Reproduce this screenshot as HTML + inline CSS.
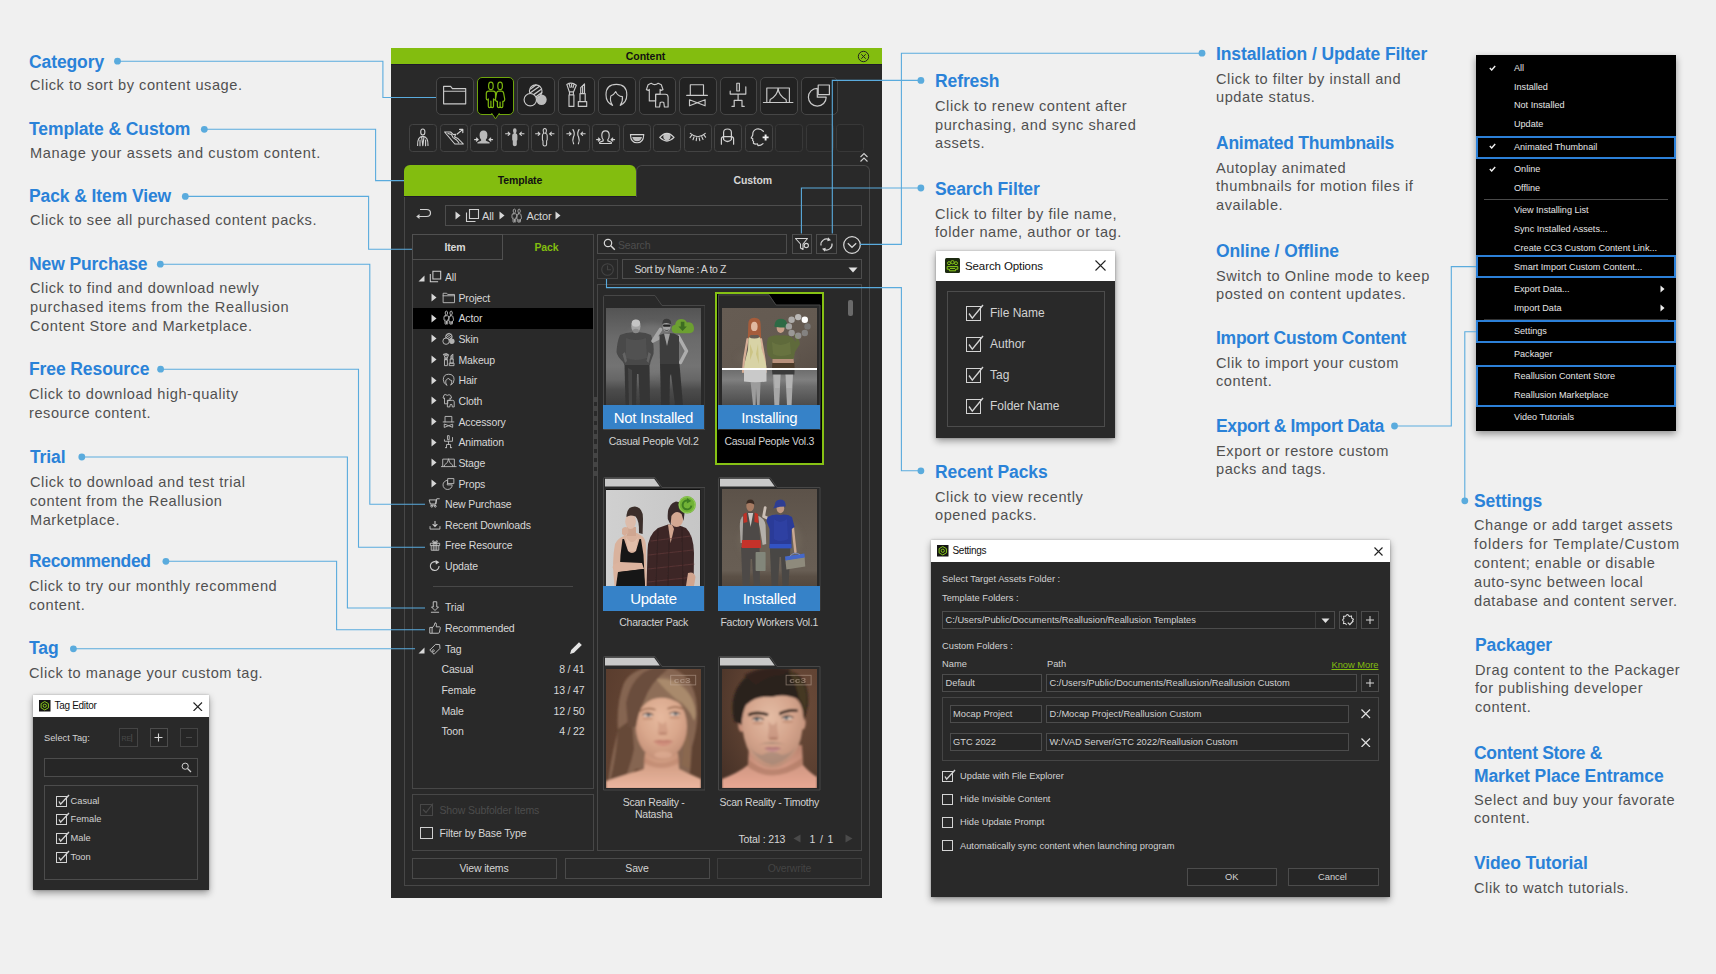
<!DOCTYPE html>
<html lang="en"><head><meta charset="utf-8"><title>Content Manager</title>
<style>
*{box-sizing:border-box;margin:0;padding:0}
html,body{width:1716px;height:974px;background:#f0f0f0;overflow:hidden}
body{font-family:"Liberation Sans",sans-serif;}
#root{position:relative;width:1716px;height:974px;background:#f0f0f0;overflow:hidden}
.a{position:absolute}
.h{position:absolute;color:#2a82d8;font-weight:bold;font-size:17.5px;line-height:22px;white-space:nowrap;letter-spacing:-0.1px;transform-origin:0 50%}
.t{position:absolute;color:#505050;font-size:14.6px;line-height:19px;white-space:nowrap;letter-spacing:0.55px}
.u{position:absolute;color:#d2d2d2;font-size:10.5px;line-height:14px;white-space:nowrap;letter-spacing:-0.2px}
.bx{position:absolute;border:1px solid #4d4d4d}
.ck{position:absolute;border:1px solid #c8c8c8}

#pn{position:absolute;left:391px;top:48px;width:491px;height:850px;background:#292929;color:#d6d6d6;font-size:10.5px}
#pn .ti{position:absolute;left:0;top:0;width:491px;height:17px;background:#83bd0f;border-bottom:1px solid #1e1a2a;color:#111;font-weight:bold;font-size:10.5px;line-height:17px;text-align:center;letter-spacing:0px;padding-left:18px}
.bb{position:absolute;width:37.5px;height:37.5px;border:1px solid #464646;border-radius:5px;background:#222;color:#c9c9c9}
.bb svg{position:absolute;left:-1px;top:-1px}
.sb{position:absolute;width:28px;height:27.5px;border:1px solid #434343;border-radius:3.5px;background:#272727;color:#d2d2d2}
.sb svg{position:absolute;left:-1px;top:-1px}
.pt{position:absolute;color:#d6d6d6;font-size:10.5px;line-height:14px;white-space:nowrap;letter-spacing:-0.15px}

#pb{position:absolute;left:391px;top:48px;width:491px;height:850px;color:#d6d6d6;font-size:10.5px}
.tab{position:absolute;top:117px;height:32px;line-height:32px;text-align:center;font-weight:bold;font-size:10.5px;letter-spacing:-0.1px}
.tr{position:absolute;left:22px;width:180px;height:20px;line-height:20px;font-size:10.5px;white-space:nowrap;color:#d8d8d8;letter-spacing:-0.15px}
.tr span{position:absolute;top:0}
.tr svg{position:absolute}
.ti path,.ti ellipse,.ti circle{stroke-width:1.75px}
.btn{position:absolute;border:1px solid #4a4a4a;text-align:center;font-size:10.5px;color:#d4d4d4;letter-spacing:-0.15px}

#pg{position:absolute;left:391px;top:48px;width:491px;height:850px;color:#d6d6d6;font-size:10.5px}
.ban{position:absolute;height:24.5px;background:rgba(55,138,214,.92);color:#fff;font-size:15px;line-height:25px;text-align:center;letter-spacing:-0.3px}
.lab{position:absolute;width:112px;text-align:center;color:#d2d2d2;font-size:10.5px;line-height:12.5px;letter-spacing:-0.25px}
.th{position:absolute;overflow:hidden}

.dlg{position:absolute;background:#292929;box-shadow:0 3px 7px rgba(0,0,0,.38), 0 0 2px rgba(0,0,0,.25)}
.dlg .tb{position:absolute;left:0;top:0;right:0;background:#fff;color:#111;font-size:10.5px}
.d{position:absolute;color:#d2d2d2;font-size:10.5px;line-height:14px;white-space:nowrap;letter-spacing:-0.2px}
.ds{position:absolute;color:#d2d2d2;font-size:9.3px;line-height:12px;white-space:nowrap;letter-spacing:0}
.in{position:absolute;border:1px solid #4c4c4c;background:#262626}
.mi{position:absolute;left:38px;color:#e6e6e6;font-size:9.1px;line-height:12px;white-space:nowrap;letter-spacing:0}
.hl{position:absolute;left:0;width:200px;border:2px solid #2c80d8}
</style></head>
<body><div id="root">
<svg class="a" style="left:0;top:0;z-index:50;pointer-events:none" width="1716" height="974" viewBox="0 0 1716 974"><path d="M117.5 61.2 L382.9 61.2 L382.9 97.5 L436 97.5" fill="none" stroke="#5aabdd" stroke-width="1.1"/><circle cx="117.5" cy="61.2" r="3.4" fill="#5aabdd"/><path d="M204.3 129.3 L375.6 129.3 L375.6 180.6 L404 180.6" fill="none" stroke="#5aabdd" stroke-width="1.1"/><circle cx="204.3" cy="129.3" r="3.4" fill="#5aabdd"/><path d="M185.3 196.4 L368.6 196.4 L368.6 249.3 L412 249.3" fill="none" stroke="#5aabdd" stroke-width="1.1"/><circle cx="185.3" cy="196.4" r="3.4" fill="#5aabdd"/><path d="M160.3 264.2 L369.8 264.2 L369.8 504.2 L425 504.2" fill="none" stroke="#5aabdd" stroke-width="1.1"/><circle cx="160.3" cy="264.2" r="3.4" fill="#5aabdd"/><path d="M160.6 369.2 L358.5 369.2 L358.5 547.2 L425 547.2" fill="none" stroke="#5aabdd" stroke-width="1.1"/><circle cx="160.6" cy="369.2" r="3.4" fill="#5aabdd"/><path d="M81.8 457 L347.4 457 L347.4 608 L425 608" fill="none" stroke="#5aabdd" stroke-width="1.1"/><circle cx="81.8" cy="457" r="3.4" fill="#5aabdd"/><path d="M165.9 561.3 L336.6 561.3 L336.6 629.8 L425 629.8" fill="none" stroke="#5aabdd" stroke-width="1.1"/><circle cx="165.9" cy="561.3" r="3.4" fill="#5aabdd"/><path d="M73.4 648.8 L415 648.8" fill="none" stroke="#5aabdd" stroke-width="1.1"/><circle cx="73.4" cy="648.8" r="3.4" fill="#5aabdd"/><path d="M920.9 80.4 L832.3 80.4 L832.3 233.5" fill="none" stroke="#5aabdd" stroke-width="1.1"/><circle cx="920.9" cy="80.4" r="3.4" fill="#5aabdd"/><path d="M920.9 188 L801.4 188 L801.4 233.5" fill="none" stroke="#5aabdd" stroke-width="1.1"/><circle cx="920.9" cy="188" r="3.4" fill="#5aabdd"/><path d="M1202 53.2 L901.4 53.2 L901.4 244.4 L860 244.4" fill="none" stroke="#5aabdd" stroke-width="1.1"/><circle cx="1202" cy="53.2" r="3.4" fill="#5aabdd"/><path d="M920.9 470.8 L901.4 470.8 L901.4 287.6 L606.5 287.6 L606.5 279" fill="none" stroke="#5aabdd" stroke-width="1.1"/><circle cx="920.9" cy="470.8" r="3.4" fill="#5aabdd"/><path d="M1394.5 426 L1451.3 426 L1451.3 266.6 L1476 266.6" fill="none" stroke="#5aabdd" stroke-width="1.1"/><circle cx="1394.5" cy="426" r="3.4" fill="#5aabdd"/><path d="M1464.8 500.8 L1464.8 331.8 L1476 331.8" fill="none" stroke="#5aabdd" stroke-width="1.1"/><circle cx="1464.8" cy="500.8" r="3.4" fill="#5aabdd"/></svg>
<div class="h" style="left:29px;top:50.7px;">Category</div>
<div class="t" style="left:30px;top:76.3px;">Click to sort by content usage.</div>
<div class="h" style="left:29px;top:117.7px;">Template &amp; Custom</div>
<div class="t" style="left:30px;top:144.3px;letter-spacing:0.63px">Manage your assets and custom content.</div>
<div class="h" style="left:29px;top:184.7px;">Pack &amp; Item View</div>
<div class="t" style="left:30px;top:211.3px;">Click to see all purchased content packs.</div>
<div class="h" style="left:29px;top:252.7px;">New Purchase</div>
<div class="t" style="left:30px;top:279.3px;">Click to find and download newly</div>
<div class="t" style="left:30px;top:298.3px;letter-spacing:0.64px">purchased items from the Reallusion</div>
<div class="t" style="left:30px;top:317.3px;">Content Store and Marketplace.</div>
<div class="h" style="left:29px;top:357.7px;">Free Resource</div>
<div class="t" style="left:29px;top:385.3px;">Click to download high-quality</div>
<div class="t" style="left:29px;top:404.3px;">resource content.</div>
<div class="h" style="left:30px;top:445.7px;">Trial</div>
<div class="t" style="left:30px;top:473.3px;">Click to download and test trial</div>
<div class="t" style="left:30px;top:492.3px;">content from the Reallusion</div>
<div class="t" style="left:30px;top:511.3px;">Marketplace.</div>
<div class="h" style="left:29px;top:549.7px;letter-spacing:-0.35px">Recommended</div>
<div class="t" style="left:29px;top:577.3px;">Click to try our monthly recommend</div>
<div class="t" style="left:29px;top:596.3px;">content.</div>
<div class="h" style="left:29px;top:636.7px;">Tag</div>
<div class="t" style="left:29px;top:664.3px;">Click to manage your custom tag.</div>
<div class="h" style="left:935px;top:69.7px;">Refresh</div>
<div class="t" style="left:935px;top:97.3px;">Click to renew content after</div>
<div class="t" style="left:935px;top:115.8px;">purchasing, and sync shared</div>
<div class="t" style="left:935px;top:134.3px;">assets.</div>
<div class="h" style="left:935px;top:177.7px;">Search Filter</div>
<div class="t" style="left:935px;top:205.3px;">Click to filter by file name,</div>
<div class="t" style="left:935px;top:223.3px;">folder name, author or tag.</div>
<div class="h" style="left:935px;top:460.7px;">Recent Packs</div>
<div class="t" style="left:935px;top:488.3px;">Click to view recently</div>
<div class="t" style="left:935px;top:506.3px;">opened packs.</div>
<div class="h" style="left:1216px;top:42.7px;">Installation / Update Filter</div>
<div class="t" style="left:1216px;top:70.3px;">Click to filter by install and</div>
<div class="t" style="left:1216px;top:88.3px;">update status.</div>
<div class="h" style="left:1216px;top:131.7px;letter-spacing:-0.25px">Animated Thumbnails</div>
<div class="t" style="left:1216px;top:159.3px;">Autoplay animated</div>
<div class="t" style="left:1216px;top:177.3px;">thumbnails for motion files if</div>
<div class="t" style="left:1216px;top:196.3px;">available.</div>
<div class="h" style="left:1216px;top:239.7px;">Online / Offline</div>
<div class="t" style="left:1216px;top:267.3px;">Switch to Online mode to keep</div>
<div class="t" style="left:1216px;top:285.3px;">posted on content updates.</div>
<div class="h" style="left:1216px;top:326.7px;letter-spacing:-0.25px">Import Custom Content</div>
<div class="t" style="left:1216px;top:354.3px;">Clik to import your custom</div>
<div class="t" style="left:1216px;top:372.3px;">content.</div>
<div class="h" style="left:1216px;top:414.7px;letter-spacing:-0.36px">Export &amp; Import Data</div>
<div class="t" style="left:1216px;top:442.3px;">Export or restore custom</div>
<div class="t" style="left:1216px;top:460.3px;">packs and tags.</div>
<div class="h" style="left:1474px;top:489.7px;">Settings</div>
<div class="t" style="left:1474px;top:516.3px;">Change or add target assets</div>
<div class="t" style="left:1474px;top:535.3px;letter-spacing:0.88px">folders for Template/Custom</div>
<div class="t" style="left:1474px;top:554.3px;">content; enable or disable</div>
<div class="t" style="left:1474px;top:573.3px;">auto-sync between local</div>
<div class="t" style="left:1474px;top:592.3px;">database and content server.</div>
<div class="h" style="left:1475px;top:633.7px;">Packager</div>
<div class="t" style="left:1475px;top:661.3px;">Drag content to the Packager</div>
<div class="t" style="left:1475px;top:679.3px;">for publishing developer</div>
<div class="t" style="left:1475px;top:698.3px;">content.</div>
<div class="h" style="left:1474px;top:741.7px;letter-spacing:-0.35px">Content Store &amp;</div>
<div class="h" style="left:1474px;top:764.7px;">Market Place Entramce</div>
<div class="t" style="left:1474px;top:791.3px;">Select and buy your favorate</div>
<div class="t" style="left:1474px;top:809.3px;">content.</div>
<div class="h" style="left:1474px;top:851.7px;">Video Tutorial</div>
<div class="t" style="left:1474px;top:879.3px;">Clik to watch tutorials.</div>
<div id="pn">
<div class="ti">Content</div>
<svg class="a" style="left:466px;top:2px" width="13" height="13" viewBox="0 0 13 13"><circle cx="6.5" cy="6.5" r="5.2" fill="none" stroke="#222" stroke-width="1"/><path d="M4.3 4.3 L8.7 8.7 M8.7 4.3 L4.3 8.7" stroke="#222" stroke-width="1" fill="none"/></svg>
<div class="bb" style="left:45.4px;top:29px"><svg width="37.5" height="37.5" viewBox="0 0 37.5 37.5"><path d="M7.6 26.8 V9.3 H14.6 L16.4 11.6 H29.7 V26.8 Z M7.6 14.2 H29.7" fill="none" stroke="currentColor" stroke-width="1.15" stroke-linejoin="round" stroke-linecap="round" /></svg></div>
<div class="bb" style="left:85.87px;top:29px;background:#000;border-color:#6fa50c;color:#7db70e"><svg width="37.5" height="37.5" viewBox="0 0 37.5 37.5"><ellipse cx="13.9" cy="8.9" rx="2.3" ry="3.8" fill="none" stroke="currentColor" stroke-width="1.2"/><ellipse cx="23.1" cy="8.9" rx="2.3" ry="3.8" fill="none" stroke="currentColor" stroke-width="1.2"/><path d="M11.6 14.2 H16.2 Q18.5 14.2 18.5 16.6 V21.6 Q18.5 22.9 17.5 22.9 Q16.5 22.9 16.5 21.9 V29.2 Q16.5 30.6 15.2 30.6 Q13.9 30.6 13.9 29.2 V24 V29.2 Q13.9 30.6 12.6 30.6 Q11.3 30.6 11.3 29.2 V21.9 Q11.3 22.9 10.3 22.9 Q9.3 22.9 9.3 21.6 V16.6 Q9.3 14.2 11.6 14.2 Z" fill="none" stroke="currentColor" stroke-width="1.2" stroke-linejoin="round" stroke-linecap="round" /><path d="M21.8 14.2 H24.4 Q26.2 14.2 26.6 16 L27.7 22 Q27.9 24 26.5 24.4 H25.8 V29.2 Q25.8 30.6 24.5 30.6 Q23.1 30.6 23.1 29.2 V25 V29.2 Q23.1 30.6 21.8 30.6 Q20.4 30.6 20.4 29.2 V24.4 H19.7 Q18.3 24 18.5 22 L19.6 16 Q20 14.2 21.8 14.2 Z" fill="none" stroke="currentColor" stroke-width="1.2" stroke-linejoin="round" stroke-linecap="round" /></svg></div>
<svg class="a" style="left:100.07000000000001px;top:65.3px" width="9" height="7" viewBox="0 0 9 7"><path d="M0.5 0 L4.5 5.8 L8.5 0" fill="#000" stroke="#6fa50c" stroke-width="1"/></svg>
<div class="bb" style="left:126.34px;top:29px"><svg width="37.5" height="37.5" viewBox="0 0 37.5 37.5"><circle cx="24.5" cy="22.8" r="5.2" fill="currentColor" opacity=".92"/><circle cx="18.7" cy="14.1" r="6.3" fill="#222" stroke="currentColor" stroke-width="1.15"/><path d="M13.6 12 L19 8 M13.4 15.8 L22.6 9.2 M15.4 18.6 L24.6 12 M19 19.8 L24.8 15.6" fill="none" stroke="currentColor" stroke-width="1.3" stroke-linejoin="round" stroke-linecap="round" /><circle cx="13.3" cy="22.7" r="6.2" fill="#222" stroke="currentColor" stroke-width="1.15"/></svg></div>
<div class="bb" style="left:166.81px;top:29px"><svg width="37.5" height="37.5" viewBox="0 0 37.5 37.5"><path d="M11 17.8 H15.9 V29.4 H11 Z M11.5 14.8 H15.4 V17.8 H11.5 Z M8.8 7.4 L11.3 14.8 H15.6 L18.3 8.2 Q13.5 4.6 8.8 7.4 Z M11.2 7 L12.2 10.5 M13.6 6.4 V10 M16 7.4 L15 10.6" fill="none" stroke="currentColor" stroke-width="1.15" stroke-linejoin="round" stroke-linecap="round" /><path d="M20.3 24.6 H28.7 V29.4 H20.3 Z M22 16.6 H27.2 V24.6 H22 Z M22.7 16.6 V10.6 L26.5 6.8 V16.6 M24.6 9.5 V16" fill="none" stroke="currentColor" stroke-width="1.15" stroke-linejoin="round" stroke-linecap="round" /></svg></div>
<div class="bb" style="left:207.28px;top:29px"><svg width="37.5" height="37.5" viewBox="0 0 37.5 37.5"><path d="M14.6 28.4 Q8 25.6 8 17.8 Q8 7.4 18.4 7.4 Q28.8 7.4 28.8 17.8 Q28.8 25.6 22.2 28.4 Q25 24.5 24.4 19.6 Q19.5 19.2 17.8 14.6 Q16.2 17.6 12.8 19 Q11.6 24.6 14.6 28.4 Z" fill="none" stroke="currentColor" stroke-width="1.15" stroke-linejoin="round" stroke-linecap="round" /></svg></div>
<div class="bb" style="left:247.75px;top:29px"><svg width="37.5" height="37.5" viewBox="0 0 37.5 37.5"><path d="M12.2 6.3 Q15.7 9 19.2 6.3 L22.3 7.7 L24 12.6 L21.3 13.6 L21.1 12.4 V17.2 H16.6 V23.9 H10.3 V12.4 L10.1 13.6 L7.4 12.6 L9.1 7.7 Z" fill="none" stroke="currentColor" stroke-width="1.15" stroke-linejoin="round" stroke-linecap="round" /><path d="M16.6 17.2 H26.4 Q29 17.2 29.1 20 V30 H25.4 L24.8 25.6 Q23 24.4 21.2 25.6 L20.6 30 H16.6 Z" fill="none" stroke="currentColor" stroke-width="1.15" stroke-linejoin="round" stroke-linecap="round" /></svg></div>
<div class="bb" style="left:288.21999999999997px;top:29px"><svg width="37.5" height="37.5" viewBox="0 0 37.5 37.5"><path d="M11.3 18.4 V7.7 H24.5 V18.4 M7.7 18.4 H28.4" fill="none" stroke="currentColor" stroke-width="1.15" stroke-linejoin="round" stroke-linecap="round" /><path d="M10.5 22.7 L18.3 25.7 L26.1 22.7 V28.8 L18.3 25.7 L10.5 28.8 Z" fill="none" stroke="currentColor" stroke-width="1.15" stroke-linejoin="round" stroke-linecap="round" /></svg></div>
<div class="bb" style="left:328.68999999999994px;top:29px"><svg width="37.5" height="37.5" viewBox="0 0 37.5 37.5"><path d="M16.8 6.2 H19.4 V14 H16.8 Z" fill="none" stroke="currentColor" stroke-width="1.15" stroke-linejoin="round" stroke-linecap="round" /><path d="M10.2 14.2 V17.1 H25.8 V9.8 M18.1 17.1 V23.3 M14.2 29.4 V23.3 H22 V29.4 M12 29.4 H14.2 M22 29.4 H24.2" fill="none" stroke="currentColor" stroke-width="1.2" stroke-linejoin="round" stroke-linecap="round" /></svg></div>
<div class="bb" style="left:369.15999999999997px;top:29px"><svg width="37.5" height="37.5" viewBox="0 0 37.5 37.5"><path d="M6.8 25.2 V11 H29.4 V25.2 M3.4 25.5 H32.9 M18.1 11 Q17.6 18.6 10.2 22.4 L9.8 25.2 M18.1 11 Q18.6 18.6 26 22.4 L26.4 25.2" fill="none" stroke="currentColor" stroke-width="1.15" stroke-linejoin="round" stroke-linecap="round" /></svg></div>
<div class="bb" style="left:409.63px;top:29px"><svg width="37.5" height="37.5" viewBox="0 0 37.5 37.5"><path d="M16.3 11.3 A8.9 8.9 0 1 0 25.2 20.2 H16.3 Z" fill="none" stroke="currentColor" stroke-width="1.2" stroke-linejoin="round" stroke-linecap="round" /><path d="M17.2 8 H28.4 V17.7 H17.2 Z" fill="#222" stroke="currentColor" stroke-width="1.2" stroke-linejoin="round" stroke-linecap="round" /></svg></div>
<div class="sb" style="left:18.0px;top:76px;"><svg width="28" height="27.5" viewBox="0 0 28 27.5"><ellipse cx="13.8" cy="8" rx="2.1" ry="3" fill="none" stroke="currentColor" stroke-width="1.1"/><path d="M8.6 21.5 Q8.2 12.6 13.8 12.4 Q19.4 12.6 19 21.5 M11 16 V21.8 M16.6 16 V21.8 M12.6 12.8 L13.8 21.6 L15 12.8" fill="none" stroke="currentColor" stroke-width="1.1" stroke-linejoin="round" stroke-linecap="round" /></svg></div>
<div class="sb" style="left:48.5px;top:76px;"><svg width="28" height="27.5" viewBox="0 0 28 27.5"><path d="M4.6 8 H10.6 L13.4 10.6 L15.6 10.2 L14.6 13 L18 14.6 L23.4 20 H14.8 Z M8 9.6 L11.4 10.6 L13 13.6 L16.6 16 L18.8 18.6" fill="none" stroke="currentColor" stroke-width="1.05" stroke-linejoin="round" stroke-linecap="round" /><path d="M17.2 10 L22.6 5.6 M19.6 5.4 H22.8 V8.6" fill="none" stroke="currentColor" stroke-width="1.2" stroke-linejoin="round" stroke-linecap="round" /></svg></div>
<div class="sb" style="left:79.0px;top:76px;"><svg width="28" height="27.5" viewBox="0 0 28 27.5"><path d="M13.5 6.6 Q17.4 6.6 17.4 11.2 Q17.4 14.4 15.9 15.6 V16.8 L19.4 18.2 Q19.8 18.6 19.6 19.6 H7.4 Q7.2 18.6 7.6 18.2 L11.1 16.8 V15.6 Q9.6 14.4 9.6 11.2 Q9.6 6.6 13.5 6.6 Z" fill="currentColor" opacity=".85"/><path d="M4.6 15.6 H8.2 M6.3999999999999995 14.0 L8.2 15.6 L6.3999999999999995 17.2 M22.6 15.6 H19 M20.8 14.0 L19 15.6 L20.8 17.2" fill="none" stroke="currentColor" stroke-width="1.1" stroke-linejoin="round" stroke-linecap="round" /></svg></div>
<div class="sb" style="left:109.5px;top:76px;"><svg width="28" height="27.5" viewBox="0 0 28 27.5"><path d="M13.8 4.2 Q15.6 4.2 15.6 6.6 Q15.6 8.6 14.6 9.2 Q16.4 9.6 16.4 11.6 V15.6 Q16.4 16.6 15.8 16.8 V20.6 Q15.8 22.2 13.8 22.2 Q11.8 22.2 11.8 20.6 V16.8 Q11.2 16.6 11.2 15.6 V11.6 Q11.2 9.6 13 9.2 Q12 8.6 12 6.6 Q12 4.2 13.8 4.2 Z" fill="currentColor" opacity=".85"/><path d="M4.6 9.8 H9 M7.2 8.200000000000001 L9 9.8 L7.2 11.4 M23 9.8 H18.6 M20.400000000000002 8.200000000000001 L18.6 9.8 L20.400000000000002 11.4" fill="none" stroke="currentColor" stroke-width="1.1" stroke-linejoin="round" stroke-linecap="round" /></svg></div>
<div class="sb" style="left:140.0px;top:76px;"><svg width="28" height="27.5" viewBox="0 0 28 27.5"><path d="M13.8 4.4 Q15.4 4.4 15.4 6.6 Q15.4 8.6 14.4 9.3 Q16.2 9.7 16.2 11.6 V15.6 Q16.2 16.5 15.6 16.8 V20.6 Q15.6 22 13.8 22 Q12 22 12 20.6 V16.8 Q11.4 16.5 11.4 15.6 V11.6 Q11.4 9.7 13.2 9.3 Q12.2 8.6 12.2 6.6 Q12.2 4.4 13.8 4.4 Z" fill="none" stroke="currentColor" stroke-width="1.05" stroke-linejoin="round" stroke-linecap="round" /><path d="M4.6 9.8 H9 M7.2 8.200000000000001 L9 9.8 L7.2 11.4 M23 9.8 H18.6 M20.400000000000002 8.200000000000001 L18.6 9.8 L20.400000000000002 11.4" fill="none" stroke="currentColor" stroke-width="1.1" stroke-linejoin="round" stroke-linecap="round" /></svg></div>
<div class="sb" style="left:170.5px;top:76px;"><svg width="28" height="27.5" viewBox="0 0 28 27.5"><path d="M11 5.6 Q13.4 9.6 11.4 13 Q10 16.6 11.6 19.8 M17 5.6 Q14.6 9.6 16.6 13 Q18 16.6 16.4 19.8" fill="none" stroke="currentColor" stroke-width="1.2" stroke-linejoin="round" stroke-linecap="round" /><path d="M4.8 9.8 H9.2 M7.3999999999999995 8.200000000000001 L9.2 9.8 L7.3999999999999995 11.4 M23.2 9.8 H18.8 M20.6 8.200000000000001 L18.8 9.8 L20.6 11.4" fill="none" stroke="currentColor" stroke-width="1.1" stroke-linejoin="round" stroke-linecap="round" /></svg></div>
<div class="sb" style="left:201.0px;top:76px;"><svg width="28" height="27.5" viewBox="0 0 28 27.5"><path d="M13.5 6.8 Q17.2 6.8 17.2 11.2 Q17.2 14.4 15.8 15.6 V16.9 L19.3 18.3 V19.5 H7.7 V18.3 L11.2 16.9 V15.6 Q9.8 14.4 9.8 11.2 Q9.8 6.8 13.5 6.8 Z" fill="none" stroke="currentColor" stroke-width="1.15" stroke-linejoin="round" stroke-linecap="round" /><path d="M4.6 15.6 H8.2 M6.3999999999999995 14.0 L8.2 15.6 L6.3999999999999995 17.2 M22.6 15.6 H19 M20.8 14.0 L19 15.6 L20.8 17.2" fill="none" stroke="currentColor" stroke-width="1.1" stroke-linejoin="round" stroke-linecap="round" /></svg></div>
<div class="sb" style="left:231.5px;top:76px;"><svg width="28" height="27.5" viewBox="0 0 28 27.5"><path d="M7.4 10.6 H20.8 Q20.4 18.8 14.1 18.8 Q7.8 18.8 7.4 10.6 Z" fill="none" stroke="currentColor" stroke-width="1.1" stroke-linejoin="round" stroke-linecap="round" /><path d="M9.2 13 H19 Q18 17.2 14.1 17.2 Q10.2 17.2 9.2 13 Z" fill="currentColor" opacity=".9"/></svg></div>
<div class="sb" style="left:262.0px;top:76px;"><svg width="28" height="27.5" viewBox="0 0 28 27.5"><path d="M6.8 13.4 Q13.9 5.2 21 13.4 Q13.9 20.6 6.8 13.4 Z" fill="none" stroke="currentColor" stroke-width="1.3" stroke-linejoin="round" stroke-linecap="round" /><circle cx="13.9" cy="12.6" r="3.6" fill="currentColor" opacity=".9"/></svg></div>
<div class="sb" style="left:292.5px;top:76px;"><svg width="28" height="27.5" viewBox="0 0 28 27.5"><path d="M6.3 9.4 Q13.8 16 21.3 9.4 M7.6 11.4 L6 13.6 M10 13 L9 15.8 M12.6 13.8 L12.2 16.6 M15.2 13.8 L15.8 16.6 M17.8 12.8 L19 15.4 M20 11.2 L21.6 13.2" fill="none" stroke="currentColor" stroke-width="1.1" stroke-linejoin="round" stroke-linecap="round" /></svg></div>
<div class="sb" style="left:323.0px;top:76px;"><svg width="28" height="27.5" viewBox="0 0 28 27.5"><path d="M9.6 12.6 V8.4 Q9.6 5 13.5 5 Q17.4 5 17.4 8.4 V12.6 M7.4 20.2 V15 Q7.4 12.8 9.6 12.6 M19.6 20.2 V15 Q19.6 12.8 17.4 12.6 M9.6 12.6 H17.4 V15.6 Q13.5 19.4 9.6 15.6 Z" fill="none" stroke="currentColor" stroke-width="1.2" stroke-linejoin="round" stroke-linecap="round" /></svg></div>
<div class="sb" style="left:353.5px;top:76px;"><svg width="28" height="27.5" viewBox="0 0 28 27.5"><path d="M18.4 7.4 Q15.6 4.2 11.6 5 Q7.4 6.4 7.8 11 L6.2 14 L7.8 14.8 L7.6 16.6 L8.6 17.4 L8.4 19.2 Q10.2 20.6 12.4 19.8 L13 21.6 Q16 21.6 18 19.6" fill="none" stroke="currentColor" stroke-width="1.2" stroke-linejoin="round" stroke-linecap="round" /><path d="M20.6 10.4 V16.4 M17.6 13.4 H23.6" stroke="#f2f2f2" stroke-width="1.9" fill="none"/></svg></div>
<div class="sb" style="left:384.0px;top:76px;border-color:#383838;"></div>
<div class="sb" style="left:414.5px;top:76px;border-color:#383838;"></div>
<div class="sb" style="left:445.0px;top:76px;border-color:#383838;"></div>
<svg class="a" style="left:468px;top:104px" width="10" height="11" viewBox="0 0 10 11"><path d="M1.5 5 L5 1.5 L8.5 5 M1.5 9.5 L5 6 L8.5 9.5" fill="none" stroke="#d0d0d0" stroke-width="1.1"/></svg>
</div>
<div id="pb">
<div class="bx" style="left:12.5px;top:148px;width:466px;height:690px;border-color:#474747"></div>
<div class="tab" style="left:245px;width:233.5px;border:1px solid #474747;border-bottom:none;border-radius:6px 6px 0 0;color:#d6d6d6;background:#292929;line-height:29px">Custom</div>
<div class="tab" style="left:13px;width:232px;background:#83bd0f;border-radius:6px 6px 0 0;color:#111;border-bottom:1px solid #1e1a2a;line-height:31px">Template</div>
<svg class="a" style="left:24px;top:159px" width="17" height="14" viewBox="0 0 17 14"><path d="M5 2.5 H11.5 Q15.5 2.5 15.5 6 Q15.5 9.5 11.5 9.5 H3" fill="none" stroke="#d0d0d0" stroke-width="1.2"/><path d="M4.5 7 L1.2 9.5 L4.5 12 Z" fill="#d0d0d0"/></svg>
<div class="bx" style="left:54px;top:157px;width:417px;height:21px"></div>
<svg class="a" style="left:64px;top:163px" width="6" height="9" viewBox="0 0 6 9"><path d="M0.5 0.5 L5.5 4.5 L0.5 8.5 Z" fill="#d8d8d8"/></svg>
<svg class="a" style="left:74px;top:160px" width="15" height="15" viewBox="0 0 15 15"><path d="M4.5 1.5 H13.5 V10.5 H4.5 Z M1.5 4.5 V13.5 H10.5" fill="none" stroke="#d0d0d0" stroke-width="1.1"/></svg>
<div class="pt" style="left:91px;top:160.5px;font-size:11px">All</div>
<svg class="a" style="left:108px;top:163px" width="6" height="9" viewBox="0 0 6 9"><path d="M0.5 0.5 L5.5 4.5 L0.5 8.5 Z" fill="#d8d8d8"/></svg>
<svg class="ti" width="16" height="16" viewBox="3.5 3 31 31" style="left:118px;top:159.5px;color:#a8a8a8;position:absolute"><ellipse cx="13.9" cy="8.9" rx="2.3" ry="3.8" fill="none" stroke="currentColor" stroke-width="1.2"/><ellipse cx="23.1" cy="8.9" rx="2.3" ry="3.8" fill="none" stroke="currentColor" stroke-width="1.2"/><path d="M11.6 14.2 H16.2 Q18.5 14.2 18.5 16.6 V21.6 Q18.5 22.9 17.5 22.9 Q16.5 22.9 16.5 21.9 V29.2 Q16.5 30.6 15.2 30.6 Q13.9 30.6 13.9 29.2 V24 V29.2 Q13.9 30.6 12.6 30.6 Q11.3 30.6 11.3 29.2 V21.9 Q11.3 22.9 10.3 22.9 Q9.3 22.9 9.3 21.6 V16.6 Q9.3 14.2 11.6 14.2 Z" fill="none" stroke="currentColor" stroke-width="1.2" stroke-linejoin="round" stroke-linecap="round" /><path d="M21.8 14.2 H24.4 Q26.2 14.2 26.6 16 L27.7 22 Q27.9 24 26.5 24.4 H25.8 V29.2 Q25.8 30.6 24.5 30.6 Q23.1 30.6 23.1 29.2 V25 V29.2 Q23.1 30.6 21.8 30.6 Q20.4 30.6 20.4 29.2 V24.4 H19.7 Q18.3 24 18.5 22 L19.6 16 Q20 14.2 21.8 14.2 Z" fill="none" stroke="currentColor" stroke-width="1.2" stroke-linejoin="round" stroke-linecap="round" /></svg>
<div class="pt" style="left:135.5px;top:160.5px;font-size:11px">Actor</div>
<svg class="a" style="left:164px;top:163px" width="6" height="9" viewBox="0 0 6 9"><path d="M0.5 0.5 L5.5 4.5 L0.5 8.5 Z" fill="#d8d8d8"/></svg>
<div class="bx" style="left:20.5px;top:186px;width:182px;height:555px;border-color:#474747"></div>
<div class="bx" style="left:20.5px;top:186px;width:91px;height:26px;border-color:#505050"></div>
<div class="pt" style="left:53.5px;top:192px;font-weight:bold;color:#d8d8d8">Item</div>
<div class="pt" style="left:143.5px;top:192px;font-weight:bold;color:#83bd0f">Pack</div>
<div class="tr" style="top:219.0px"><svg width="7" height="7" viewBox="0 0 7 7" style="left:4.5px;top:8px"><path d="M6.5 0.5 V6.5 H0.5 Z" fill="#d8d8d8"/></svg><svg width="13" height="13" viewBox="0 0 15 15" style="left:16px;top:3px"><path d="M4.5 1.5 H13.5 V10.5 H4.5 Z M1.5 4.5 V13.5 H10.5" fill="none" stroke="#d0d0d0" stroke-width="1.2"/></svg><span style="left:32px">All</span></div>
<div class="tr" style="top:239.7px"><svg width="6" height="9" viewBox="0 0 6 9" style="left:18px;top:5.5px"><path d="M0.5 0.5 L5.5 4.5 L0.5 8.5 Z" fill="#d8d8d8"/></svg><svg class="ti" width="16" height="16" viewBox="3.5 3 31 31" style="left:28px;top:2px;color:#bebebe;position:absolute"><path d="M7.6 26.8 V9.3 H14.6 L16.4 11.6 H29.7 V26.8 Z M7.6 14.2 H29.7" fill="none" stroke="currentColor" stroke-width="1.15" stroke-linejoin="round" stroke-linecap="round" /></svg><span style="left:45.5px">Project</span></div>
<div class="a" style="left:21.5px;top:260.3px;width:180px;height:20.5px;background:#000"></div>
<div class="tr" style="top:260.3px"><svg width="6" height="9" viewBox="0 0 6 9" style="left:18px;top:5.5px"><path d="M0.5 0.5 L5.5 4.5 L0.5 8.5 Z" fill="#d8d8d8"/></svg><svg class="ti" width="16" height="16" viewBox="3.5 3 31 31" style="left:28px;top:2px;color:#bebebe;position:absolute"><ellipse cx="13.9" cy="8.9" rx="2.3" ry="3.8" fill="none" stroke="currentColor" stroke-width="1.2"/><ellipse cx="23.1" cy="8.9" rx="2.3" ry="3.8" fill="none" stroke="currentColor" stroke-width="1.2"/><path d="M11.6 14.2 H16.2 Q18.5 14.2 18.5 16.6 V21.6 Q18.5 22.9 17.5 22.9 Q16.5 22.9 16.5 21.9 V29.2 Q16.5 30.6 15.2 30.6 Q13.9 30.6 13.9 29.2 V24 V29.2 Q13.9 30.6 12.6 30.6 Q11.3 30.6 11.3 29.2 V21.9 Q11.3 22.9 10.3 22.9 Q9.3 22.9 9.3 21.6 V16.6 Q9.3 14.2 11.6 14.2 Z" fill="none" stroke="currentColor" stroke-width="1.2" stroke-linejoin="round" stroke-linecap="round" /><path d="M21.8 14.2 H24.4 Q26.2 14.2 26.6 16 L27.7 22 Q27.9 24 26.5 24.4 H25.8 V29.2 Q25.8 30.6 24.5 30.6 Q23.1 30.6 23.1 29.2 V25 V29.2 Q23.1 30.6 21.8 30.6 Q20.4 30.6 20.4 29.2 V24.4 H19.7 Q18.3 24 18.5 22 L19.6 16 Q20 14.2 21.8 14.2 Z" fill="none" stroke="currentColor" stroke-width="1.2" stroke-linejoin="round" stroke-linecap="round" /></svg><span style="left:45.5px">Actor</span></div>
<div class="tr" style="top:280.9px"><svg width="6" height="9" viewBox="0 0 6 9" style="left:18px;top:5.5px"><path d="M0.5 0.5 L5.5 4.5 L0.5 8.5 Z" fill="#d8d8d8"/></svg><svg class="ti" width="16" height="16" viewBox="3.5 3 31 31" style="left:28px;top:2px;color:#bebebe;position:absolute"><circle cx="24.5" cy="22.8" r="5.2" fill="currentColor" opacity=".92"/><circle cx="18.7" cy="14.1" r="6.3" fill="#292929" stroke="currentColor" stroke-width="1.15"/><path d="M13.6 12 L19 8 M13.4 15.8 L22.6 9.2 M15.4 18.6 L24.6 12 M19 19.8 L24.8 15.6" fill="none" stroke="currentColor" stroke-width="1.3" stroke-linejoin="round" stroke-linecap="round" /><circle cx="13.3" cy="22.7" r="6.2" fill="#292929" stroke="currentColor" stroke-width="1.15"/></svg><span style="left:45.5px">Skin</span></div>
<div class="tr" style="top:301.6px"><svg width="6" height="9" viewBox="0 0 6 9" style="left:18px;top:5.5px"><path d="M0.5 0.5 L5.5 4.5 L0.5 8.5 Z" fill="#d8d8d8"/></svg><svg class="ti" width="16" height="16" viewBox="3.5 3 31 31" style="left:28px;top:2px;color:#bebebe;position:absolute"><path d="M11 17.8 H15.9 V29.4 H11 Z M11.5 14.8 H15.4 V17.8 H11.5 Z M8.8 7.4 L11.3 14.8 H15.6 L18.3 8.2 Q13.5 4.6 8.8 7.4 Z M11.2 7 L12.2 10.5 M13.6 6.4 V10 M16 7.4 L15 10.6" fill="none" stroke="currentColor" stroke-width="1.15" stroke-linejoin="round" stroke-linecap="round" /><path d="M20.3 24.6 H28.7 V29.4 H20.3 Z M22 16.6 H27.2 V24.6 H22 Z M22.7 16.6 V10.6 L26.5 6.8 V16.6 M24.6 9.5 V16" fill="none" stroke="currentColor" stroke-width="1.15" stroke-linejoin="round" stroke-linecap="round" /></svg><span style="left:45.5px">Makeup</span></div>
<div class="tr" style="top:322.2px"><svg width="6" height="9" viewBox="0 0 6 9" style="left:18px;top:5.5px"><path d="M0.5 0.5 L5.5 4.5 L0.5 8.5 Z" fill="#d8d8d8"/></svg><svg class="ti" width="16" height="16" viewBox="3.5 3 31 31" style="left:28px;top:2px;color:#bebebe;position:absolute"><path d="M14.6 28.4 Q8 25.6 8 17.8 Q8 7.4 18.4 7.4 Q28.8 7.4 28.8 17.8 Q28.8 25.6 22.2 28.4 Q25 24.5 24.4 19.6 Q19.5 19.2 17.8 14.6 Q16.2 17.6 12.8 19 Q11.6 24.6 14.6 28.4 Z" fill="none" stroke="currentColor" stroke-width="1.15" stroke-linejoin="round" stroke-linecap="round" /></svg><span style="left:45.5px">Hair</span></div>
<div class="tr" style="top:342.9px"><svg width="6" height="9" viewBox="0 0 6 9" style="left:18px;top:5.5px"><path d="M0.5 0.5 L5.5 4.5 L0.5 8.5 Z" fill="#d8d8d8"/></svg><svg class="ti" width="16" height="16" viewBox="3.5 3 31 31" style="left:28px;top:2px;color:#bebebe;position:absolute"><path d="M12.2 6.3 Q15.7 9 19.2 6.3 L22.3 7.7 L24 12.6 L21.3 13.6 L21.1 12.4 V17.2 H16.6 V23.9 H10.3 V12.4 L10.1 13.6 L7.4 12.6 L9.1 7.7 Z" fill="none" stroke="currentColor" stroke-width="1.15" stroke-linejoin="round" stroke-linecap="round" /><path d="M16.6 17.2 H26.4 Q29 17.2 29.1 20 V30 H25.4 L24.8 25.6 Q23 24.4 21.2 25.6 L20.6 30 H16.6 Z" fill="none" stroke="currentColor" stroke-width="1.15" stroke-linejoin="round" stroke-linecap="round" /></svg><span style="left:45.5px">Cloth</span></div>
<div class="tr" style="top:363.5px"><svg width="6" height="9" viewBox="0 0 6 9" style="left:18px;top:5.5px"><path d="M0.5 0.5 L5.5 4.5 L0.5 8.5 Z" fill="#d8d8d8"/></svg><svg class="ti" width="16" height="16" viewBox="3.5 3 31 31" style="left:28px;top:2px;color:#bebebe;position:absolute"><path d="M11.3 18.4 V7.7 H24.5 V18.4 M7.7 18.4 H28.4" fill="none" stroke="currentColor" stroke-width="1.15" stroke-linejoin="round" stroke-linecap="round" /><path d="M10.5 22.7 L18.3 25.7 L26.1 22.7 V28.8 L18.3 25.7 L10.5 28.8 Z" fill="none" stroke="currentColor" stroke-width="1.15" stroke-linejoin="round" stroke-linecap="round" /></svg><span style="left:45.5px">Accessory</span></div>
<div class="tr" style="top:384.2px"><svg width="6" height="9" viewBox="0 0 6 9" style="left:18px;top:5.5px"><path d="M0.5 0.5 L5.5 4.5 L0.5 8.5 Z" fill="#d8d8d8"/></svg><svg class="ti" width="16" height="16" viewBox="3.5 3 31 31" style="left:28px;top:2px;color:#bebebe;position:absolute"><path d="M16.8 6.2 H19.4 V14 H16.8 Z" fill="none" stroke="currentColor" stroke-width="1.15" stroke-linejoin="round" stroke-linecap="round" /><path d="M10.2 14.2 V17.1 H25.8 V9.8 M18.1 17.1 V23.3 M14.2 29.4 V23.3 H22 V29.4 M12 29.4 H14.2 M22 29.4 H24.2" fill="none" stroke="currentColor" stroke-width="1.2" stroke-linejoin="round" stroke-linecap="round" /></svg><span style="left:45.5px">Animation</span></div>
<div class="tr" style="top:404.9px"><svg width="6" height="9" viewBox="0 0 6 9" style="left:18px;top:5.5px"><path d="M0.5 0.5 L5.5 4.5 L0.5 8.5 Z" fill="#d8d8d8"/></svg><svg class="ti" width="16" height="16" viewBox="3.5 3 31 31" style="left:28px;top:2px;color:#bebebe;position:absolute"><path d="M6.8 25.2 V11 H29.4 V25.2 M3.4 25.5 H32.9 M18.1 11 Q17.6 18.6 10.2 22.4 L9.8 25.2 M18.1 11 Q18.6 18.6 26 22.4 L26.4 25.2" fill="none" stroke="currentColor" stroke-width="1.15" stroke-linejoin="round" stroke-linecap="round" /></svg><span style="left:45.5px">Stage</span></div>
<div class="tr" style="top:425.5px"><svg width="6" height="9" viewBox="0 0 6 9" style="left:18px;top:5.5px"><path d="M0.5 0.5 L5.5 4.5 L0.5 8.5 Z" fill="#d8d8d8"/></svg><svg class="ti" width="16" height="16" viewBox="3.5 3 31 31" style="left:28px;top:2px;color:#bebebe;position:absolute"><path d="M16.3 11.3 A8.9 8.9 0 1 0 25.2 20.2 H16.3 Z" fill="none" stroke="currentColor" stroke-width="1.2" stroke-linejoin="round" stroke-linecap="round" /><path d="M17.2 8 H28.4 V17.7 H17.2 Z" fill="#292929" stroke="currentColor" stroke-width="1.2" stroke-linejoin="round" stroke-linecap="round" /></svg><span style="left:45.5px">Props</span></div>
<div class="tr" style="top:446.1px"><svg width="14" height="14" viewBox="0 0 24 24" style="left:14.5px;top:3px;color:#cfcfcf;position:absolute"><path d="M2 5 H14 L13 12 H4 Z M15 3 H20 M15 3 L13.5 12 M5 16 a1.5 1.5 0 1 0 3 0 a1.5 1.5 0 1 0 -3 0 Z M11 16 a1.5 1.5 0 1 0 3 0 a1.5 1.5 0 1 0 -3 0 Z M4 14 H14" fill="none" stroke="currentColor" stroke-width="1.5"/></svg><span style="left:32px">New Purchase</span></div>
<div class="tr" style="top:466.8px"><svg width="14" height="14" viewBox="0 0 24 24" style="left:14.5px;top:3px;color:#cfcfcf;position:absolute"><path d="M12 5 V14 M8 10.5 L12 14.5 L16 10.5" fill="none" stroke="currentColor" stroke-width="1.8"/><path d="M3.5 14 V19 H20.5 V14" fill="none" stroke="currentColor" stroke-width="1.5"/></svg><span style="left:32px">Recent Downloads</span></div>
<div class="tr" style="top:487.4px"><svg width="14" height="14" viewBox="0 0 24 24" style="left:14.5px;top:3px;color:#cfcfcf;position:absolute"><path d="M4 9 H20 V13 H4 Z M5.5 13 V21 H18.5 V13 M12 9 V21 M9 9 V21 M15 9 V21 M12 9 Q7 8 8 5 Q10 3 12 9 Q14 3 16 5 Q17 8 12 9" fill="none" stroke="currentColor" stroke-width="1.4"/></svg><span style="left:32px">Free Resource</span></div>
<div class="tr" style="top:508.1px"><svg width="14" height="14" viewBox="0 0 24 24" style="left:14.5px;top:3px;color:#cfcfcf;position:absolute"><path d="M19 12 A7.5 7.5 0 1 1 14 5" fill="none" stroke="currentColor" stroke-width="1.8"/><path d="M13 1.5 L19.5 5.5 L13.5 9.5 Z" fill="currentColor"/></svg><span style="left:32px">Update</span></div>
<div class="a" style="left:42px;top:538.2px;width:140px;height:1px;background:#484848"></div>
<div class="tr" style="top:549.4px"><svg width="14" height="14" viewBox="0 0 24 24" style="left:14.5px;top:3px;color:#cfcfcf;position:absolute"><path d="M9 3 H15 V12 H18 L12 18 L6 12 H9 Z M5 21 H19" fill="none" stroke="currentColor" stroke-width="1.5" stroke-linejoin="round"/></svg><span style="left:32px">Trial</span></div>
<div class="tr" style="top:570.0px"><svg width="14" height="14" viewBox="0 0 24 24" style="left:14.5px;top:3px;color:#cfcfcf;position:absolute"><path d="M3 11 H7 V21 H3 Z M7 12 L11 7 L12 3 Q14.5 3 14.5 6 L14 10 H20 Q21.5 10.5 21 12.5 L19.5 19.5 Q19 21 17.5 21 H7" fill="none" stroke="currentColor" stroke-width="1.5" stroke-linejoin="round"/></svg><span style="left:32px">Recommended</span></div>
<div class="tr" style="top:590.7px"><svg width="7" height="7" viewBox="0 0 7 7" style="left:4.5px;top:8px"><path d="M6.5 0.5 V6.5 H0.5 Z" fill="#d8d8d8"/></svg><svg width="14" height="14" viewBox="0 0 24 24" style="left:14.5px;top:3px;color:#cfcfcf;position:absolute"><path d="M3 14 L13 4 L20 4.5 L20.5 11 L10.5 21 Z" fill="none" stroke="currentColor" stroke-width="1.5" stroke-linejoin="round"/><circle cx="9" cy="15" r="1.8" fill="none" stroke="currentColor" stroke-width="1.3"/></svg><span style="left:32px">Tag</span><svg width="14" height="14" viewBox="0 0 14 14" style="left:156px;top:2.5px"><path d="M1 13 L2.2 9 L10 1.2 L12.8 4 L5 11.8 Z" fill="#e4e4e4"/></svg></div>
<div class="tr" style="top:611.3px"><span style="left:28.5px">Casual</span><span style="right:8.5px">8 / 41</span></div>
<div class="tr" style="top:632.0px"><span style="left:28.5px">Female</span><span style="right:8.5px">13 / 47</span></div>
<div class="tr" style="top:652.6px"><span style="left:28.5px">Male</span><span style="right:8.5px">12 / 50</span></div>
<div class="tr" style="top:673.3px"><span style="left:28.5px">Toon</span><span style="right:8.5px">4 / 22</span></div>
<div class="bx" style="left:20.5px;top:745.5px;width:182px;height:57px;border-color:#474747"></div>
<div class="a" style="left:29px;top:755.5px;width:12.5px;height:12.5px;border:1px solid #484848"></div>
<svg class="a" style="left:29px;top:753px" width="15" height="15" viewBox="0 0 15 15"><path d="M3 8.5 L6 11.5 L13 2.5" fill="none" stroke="#484848" stroke-width="1.2"/></svg>
<div class="pt" style="left:48.5px;top:754.5px;color:#4c4c4c">Show Subfolder Items</div>
<div class="a" style="left:29px;top:778.5px;width:12.5px;height:12.5px;border:1px solid #cfcfcf"></div>
<div class="pt" style="left:48.5px;top:777.5px">Filter by Base Type</div>
<div class="btn" style="left:20.5px;top:809.5px;width:145px;height:21px;line-height:19px">View items</div>
<div class="btn" style="left:173.5px;top:809.5px;width:145px;height:21px;line-height:19px">Save</div>
<div class="btn" style="left:326px;top:809.5px;width:145px;height:21px;line-height:19px;color:#444;border-color:#3e3e3e">Overwrite</div>
</div>
<div id="pg">
<div class="bx" style="left:206px;top:186px;width:190px;height:20px"></div>
<svg class="a" style="left:211.5px;top:189.5px" width="13" height="13" viewBox="0 0 13 13"><circle cx="5" cy="5" r="3.7" fill="none" stroke="#d8d8d8" stroke-width="1.2"/><path d="M7.8 7.8 L11.8 11.8" stroke="#d8d8d8" stroke-width="1.5"/></svg>
<div class="pt" style="left:227px;top:189.5px;color:#4e4e4e">Search</div>
<div class="bx" style="left:400.5px;top:186px;width:20.5px;height:20px"></div>
<svg class="a" style="left:402.5px;top:188px" width="17" height="16" viewBox="0 0 17 16"><path d="M1.5 2.5 H13.5 L9 8 V13.5 L6.5 12 V8 Z" fill="none" stroke="#d4d4d4" stroke-width="1.1" stroke-linejoin="round"/><circle cx="12.3" cy="9.5" r="2.1" fill="#292929" stroke="#d4d4d4" stroke-width="1.1"/></svg>
<div class="bx" style="left:425px;top:186px;width:20.5px;height:20px"></div>
<svg class="a" style="left:427px;top:187.5px" width="17" height="17" viewBox="0 0 17 17"><path d="M3 9.5 A5.6 5.6 0 0 1 11 3.6 M14 7.5 A5.6 5.6 0 0 1 6 13.4" fill="none" stroke="#d4d4d4" stroke-width="1.2"/><path d="M10 1.2 L13 4.2 L9.3 5.3 Z M7 15.8 L4 12.8 L7.7 11.7 Z" fill="#d4d4d4"/></svg>
<svg class="a" style="left:450.5px;top:186.5px" width="20" height="20" viewBox="0 0 20 20"><circle cx="10" cy="10" r="8.3" fill="none" stroke="#d8d8d8" stroke-width="1.2"/><path d="M5.8 8.3 L10 12.3 L14.2 8.3" fill="none" stroke="#d8d8d8" stroke-width="1.2"/></svg>
<div class="bx" style="left:206px;top:211px;width:20.5px;height:20px;border-color:#424242"></div>
<svg class="a" style="left:209px;top:214px" width="15" height="15" viewBox="0 0 15 15"><circle cx="7.5" cy="7.5" r="5.8" fill="none" stroke="#444" stroke-width="1.1"/><path d="M7.5 3.5 V7.8 H11" fill="none" stroke="#444" stroke-width="1.1"/></svg>
<div class="bx" style="left:231px;top:211px;width:240px;height:20px"></div>
<div class="pt" style="left:243.5px;top:214px;letter-spacing:-0.4px">Sort by Name : A to Z</div>
<svg class="a" style="left:456.5px;top:218.5px" width="10" height="6" viewBox="0 0 10 6"><path d="M0.5 0.5 H9.5 L5 5.5 Z" fill="#e0e0e0"/></svg>
<div class="bx" style="left:206px;top:235.5px;width:265px;height:567px;border-color:#474747"></div>
<div class="a" style="left:456.5px;top:252px;width:5px;height:16px;border-radius:2px;background:#6a6a6a"></div>
<div class="a" style="left:202.5px;top:349.0px;width:3.5px;height:5px;background:#444"></div>
<div class="a" style="left:202.5px;top:358.3px;width:3.5px;height:5px;background:#444"></div>
<div class="a" style="left:202.5px;top:367.6px;width:3.5px;height:5px;background:#444"></div>
<div class="a" style="left:202.5px;top:376.9px;width:3.5px;height:5px;background:#444"></div>
<div class="a" style="left:202.5px;top:386.2px;width:3.5px;height:5px;background:#444"></div>
<div class="a" style="left:202.5px;top:395.5px;width:3.5px;height:5px;background:#444"></div>
<div class="a" style="left:202.5px;top:404.8px;width:3.5px;height:5px;background:#444"></div>
<div class="a" style="left:202.5px;top:414.1px;width:3.5px;height:5px;background:#444"></div>
<div class="a" style="left:202.5px;top:423.4px;width:3.5px;height:5px;background:#444"></div>
<svg class="a" style="left:211.7px;top:246.5px" width="102.5" height="135" viewBox="0 0 102.5 135"><path d="M0.5 134.5 V1.5 Q0.5 0.5 1.5 0.5 H52 L59 10.5 H102.0 V134.5 Z" fill="none" stroke="#474747" stroke-width="1"/></svg>
<div class="th" style="left:215.2px;top:259.8px;width:94.5px;height:97px"><svg width="95" height="97" viewBox="0 0 95 97" style="position:absolute;left:0;top:0;display:block"><defs><filter id="f1" x="-10%" y="-10%" width="120%" height="120%"><feGaussianBlur stdDeviation="0.7"/></filter><filter id="g1" x="-30%" y="-30%" width="160%" height="160%"><feGaussianBlur stdDeviation="2.4"/></filter><filter id="k1" x="-10%" y="-10%" width="120%" height="120%"><feGaussianBlur stdDeviation="1.05"/></filter><filter id="h1" x="-30%" y="-30%" width="160%" height="160%"><feGaussianBlur stdDeviation="1.3"/></filter><clipPath id="c1"><rect x="0" y="0" width="95" height="97"/></clipPath><linearGradient id="b1" x1="0" y1="0" x2="0" y2="1"><stop offset="0" stop-color="#545454"/><stop offset=".3" stop-color="#6a6a6a"/><stop offset=".6" stop-color="#737373"/><stop offset=".74" stop-color="#666"/><stop offset=".84" stop-color="#4c4c4c"/><stop offset="1" stop-color="#3c3c3c"/></linearGradient></defs><g clip-path="url(#c1)"><rect x="0" y="0" width="95" height="97" rx="0" fill="url(#b1)" opacity="1"/><ellipse cx="46" cy="42" rx="30" ry="26" fill="#7e7e7e" opacity="0.55" filter="url(#g1)"/><g filter="url(#f1)"><path d="M18.5 56 L19.5 97 L30 97 L31 66 L32.5 66 L34 97 L44 97 L43.5 56 Z" fill="#353535" opacity="1"/><path d="M22 60 L23 97 L26 97 L26 62 Z" fill="#484848" opacity="0.8"/><path d="M14 27 Q22 23.5 30 24.5 Q38 23.5 45 27 Q48.5 36 47.5 46 L44.5 54 L44 57 L18.5 57 L17 54 Q11 48 10.5 44 Q11 34 14 27 Z" fill="#484848" opacity="1"/><path d="M20 30 Q30 34 40 30 L41 50 Q30 54 20 50 Z" fill="#555" opacity="0.7"/><path d="M16.5 46 L19 55 L21 53 L19 44 Z" fill="#6a6a6a" opacity="0.8"/><path d="M45 46 L42.5 55 L40.5 53 L42.5 44 Z" fill="#6a6a6a" opacity="0.8"/><ellipse cx="29.9" cy="18.2" rx="4.6" ry="6.5" fill="#a4a4a4" opacity="1"/><ellipse cx="29.9" cy="15.2" rx="4.2" ry="3.6" fill="#c4c4c4" opacity="1"/><ellipse cx="29.9" cy="23" rx="3" ry="2.2" fill="#8a8a8a" opacity="1"/><path d="M54 56 L55 97 L63.5 97 L64 68 L65 66 L69 97 L77 97 L73.5 56 Z" fill="#333" opacity="1"/><path d="M55 29 L47 33 L54.5 21.5" fill="none" stroke="#a6a6a6" stroke-width="3.6" stroke-linecap="round" stroke-linejoin="round" opacity="1"/><path d="M72.5 28.5 L80.5 43 L74.5 54.5" fill="none" stroke="#adadad" stroke-width="3.4" stroke-linecap="round" stroke-linejoin="round" opacity="1"/><path d="M53.5 27 Q60.5 24 68 25.5 L73 28 L73 56 L54 56 Z" fill="#3d3d3d" opacity="1"/><path d="M58 25.5 L61 38 L64 25.5 Z" fill="#a0a0a0" opacity="1"/><ellipse cx="60.7" cy="18" rx="4" ry="5.8" fill="#a2a2a2" opacity="1"/><path d="M56.3 16 Q56.5 10.5 61 10.8 Q65.5 11 65.2 16.4 Q61 13.6 56.3 16 Z" fill="#3a3a3a" opacity="1"/><rect x="57" y="16.4" width="7.6" height="2.4" rx="1" fill="#242424" opacity="1"/><path d="M58 21 Q60.7 25.5 63.4 21 Q60.7 23 58 21 Z" fill="#555" opacity="1"/></g></g><g transform="translate(65.2,10.2)"><path d="M5.2 15 Q0.4 15 0.4 10.8 Q0.4 7.2 4 6.6 Q4.4 1.2 9.8 0.8 Q14 0.8 15.8 4.2 Q21.6 3.6 22.6 8.6 Q24 14.6 18.6 15 Z" fill="#6c9f31"/><path d="M9.6 3.6 H13.2 V8.2 H15.6 L11.4 12.8 L7.2 8.2 H9.6 Z" fill="#3d6c22"/></g></svg></div>
<div class="ban" style="left:211.7px;top:356.8px;width:101.5px">Not Installed</div>
<div class="lab" style="left:206.7px;top:386.5px">Casual People Vol.2</div>
<div class="a" style="left:323.7px;top:243.5px;width:109px;height:173px;border:2px solid #86c114;background:#000"></div>
<svg class="a" style="left:327.3px;top:246px" width="102.5" height="136" viewBox="0 0 102.5 136"><path d="M0 136 V0 H51 L58 11 H102.5 V136 Z" fill="#292929"/><path d="M0.5 136 V1 H51 L58 11 H102 V136" fill="none" stroke="#474747" stroke-width="1"/></svg>
<div class="th" style="left:331px;top:259.8px;width:94.5px;height:97px"><svg width="95" height="97" viewBox="0 0 95 97" style="position:absolute;left:0;top:0;display:block"><defs><filter id="f2" x="-10%" y="-10%" width="120%" height="120%"><feGaussianBlur stdDeviation="0.7"/></filter><filter id="g2" x="-30%" y="-30%" width="160%" height="160%"><feGaussianBlur stdDeviation="2.4"/></filter><filter id="k2" x="-10%" y="-10%" width="120%" height="120%"><feGaussianBlur stdDeviation="1.05"/></filter><filter id="h2" x="-30%" y="-30%" width="160%" height="160%"><feGaussianBlur stdDeviation="1.3"/></filter><clipPath id="c2"><rect x="0" y="0" width="95" height="97"/></clipPath><linearGradient id="b2" x1="0" y1="0" x2="1" y2="1"><stop offset="0" stop-color="#665c53"/><stop offset=".6" stop-color="#645a51"/><stop offset="1" stop-color="#594f47"/></linearGradient><linearGradient id="b2b" x1="0" y1="0" x2="0" y2="1"><stop offset="0" stop-color="#6c6c6c"/><stop offset=".3" stop-color="#808080"/><stop offset=".48" stop-color="#6c6c6c"/><stop offset="1" stop-color="#4c4c4c"/></linearGradient></defs><g clip-path="url(#c2)"><rect x="0" y="0" width="95" height="61" rx="0" fill="url(#b2)" opacity="1"/><ellipse cx="44" cy="50" rx="30" ry="10" fill="#6c6258" opacity="0.5" filter="url(#g2)"/><rect x="0" y="61" width="95" height="36" rx="0" fill="url(#b2b)" opacity="1"/><g filter="url(#f2)"><path d="M28.5 73 L31 97 L33.6 97 L34 80 L35 97 L37.6 97 L38.6 73 Z" fill="#9c9c9c" opacity="1"/><path d="M25.5 31 L22 52 L21 64" fill="none" stroke="#d6ae96" stroke-width="2.2" stroke-linecap="round" stroke-linejoin="round" opacity="1"/><path d="M39 31 L42.6 52 L43.6 64" fill="none" stroke="#d6ae96" stroke-width="2.2" stroke-linecap="round" stroke-linejoin="round" opacity="1"/><path d="M26.5 29 Q32.3 32 38.2 29 L40 42 Q44.5 56 44.5 61 L22 61 Q22 56 26 42 Z" fill="#d8d3a6" opacity="1"/><path d="M22 61 H44.5 L44.5 73.5 Q33 75 22 73.5 Z" fill="#c9c9c9" opacity="1"/><path d="M28 36 L31 44 L28 52 Z M36 36 L34 46 L37 56 Z" fill="#c2b86a" opacity="0.55"/><path d="M26.3 16 Q26.3 9.8 32.3 9.8 Q38.6 9.8 38.6 16 L39.2 31 L36.2 27 L28.6 27 L25.8 31 Z" fill="#a55c3b" opacity="1"/><ellipse cx="32.3" cy="18.4" rx="3.3" ry="4.7" fill="#e0b8a0" opacity="1"/><path d="M51 66 L52.4 97 L57.2 97 L58.6 66 Z" fill="#a6a6a6" opacity="1"/><path d="M63.4 66 L65 97 L69.6 97 L71 66 Z" fill="#a9a9a9" opacity="1"/><path d="M52 66 L53 80 L57.6 80 L58.4 66 Z" fill="#b4b4b4" opacity="0.8"/><path d="M63.8 66 L64.6 80 L69.8 80 L70.8 66 Z" fill="#b6b6b6" opacity="0.8"/><path d="M50.3 54 H72.4 L72.6 61 H50 Z" fill="#4b3b2b" opacity="1"/><path d="M50 61 H72.6 L72.4 66.6 H50.4 Z" fill="#3b3b3b" opacity="1"/><path d="M50.6 50 H71.4 L72 55 H50.4 Z" fill="#b8917b" opacity="1"/><path d="M46 30 Q50 26.5 58.5 27.5 Q66 26.5 70 29.5 L74 34 L72 27 L75.4 26 L78 36 L73 44 L71.6 51 L50 51 L46 47 Q43.6 38 46 30 Z" fill="#5f6a3b" opacity="1"/><path d="M50 34 Q58 40 68 34 L69 46 Q58 50 51 46 Z" fill="#6e7a46" opacity="0.6"/><ellipse cx="58.6" cy="20" rx="3.9" ry="5" fill="#c9a089" opacity="1"/><path d="M52.3 18.8 Q52.6 10.6 59 10.8 Q65.2 11 65.2 17.6 L66.4 19.4 L58 19.6 Z" fill="#2f6b45" opacity="1"/></g><rect x="0" y="60" width="95" height="2" rx="0" fill="#ffffff" opacity="1"/></g><circle cx="76.2" cy="9.1" r="3.2" fill="#cfcfcf" opacity="0.8"/><circle cx="82.8" cy="11.8" r="3.2" fill="#ffffff" opacity="1"/><circle cx="85.5" cy="18.4" r="3.2" fill="#7c7c7c" opacity="0.8"/><circle cx="82.8" cy="25.0" r="3.2" fill="#8c8c8c" opacity="0.8"/><circle cx="76.2" cy="27.7" r="3.2" fill="#9c9c9c" opacity="0.8"/><circle cx="69.6" cy="25.0" r="3.2" fill="#a8a8a8" opacity="0.8"/><circle cx="66.9" cy="18.4" r="3.2" fill="#b4b4b4" opacity="0.8"/><circle cx="69.6" cy="11.8" r="3.2" fill="#c0c0c0" opacity="0.8"/></svg></div>
<div class="ban" style="left:327.3px;top:356.8px;width:102px">Installing</div>
<div class="lab" style="left:322.3px;top:386.5px">Casual People Vol.3</div>
<svg class="a" style="left:211.7px;top:429px" width="102.5" height="134" viewBox="0 0 102.5 134"><path d="M0.5 133.5 V1.5 Q0.5 0.5 1.5 0.5 H52 L59 10.5 H102.0 V133.5 Z" fill="none" stroke="#474747" stroke-width="1"/><path d="M2 1.8 H51.2 L56.8 9.6 H2 Z" fill="#c9c9c9"/></svg>
<div class="th" style="left:215.2px;top:441.2px;width:94.5px;height:97px"><svg width="95" height="97" viewBox="0 0 95 97" style="position:absolute;left:0;top:0;display:block"><defs><filter id="f3" x="-10%" y="-10%" width="120%" height="120%"><feGaussianBlur stdDeviation="0.7"/></filter><filter id="g3" x="-30%" y="-30%" width="160%" height="160%"><feGaussianBlur stdDeviation="2.4"/></filter><filter id="k3" x="-10%" y="-10%" width="120%" height="120%"><feGaussianBlur stdDeviation="1.05"/></filter><filter id="h3" x="-30%" y="-30%" width="160%" height="160%"><feGaussianBlur stdDeviation="1.3"/></filter><clipPath id="c3"><rect x="0" y="0" width="95" height="97"/></clipPath><linearGradient id="b3" x1="0" y1="0" x2="1" y2="0"><stop offset="0" stop-color="#d0d0d0"/><stop offset="1" stop-color="#c6c6c6"/></linearGradient></defs><g clip-path="url(#c3)"><rect x="0" y="0" width="95" height="97" rx="0" fill="url(#b3)" opacity="1"/><g filter="url(#f3)"><path d="M8.5 97 Q5.5 72 9 55 Q12 49 18 47 L24 44 L31 44 L36 47 Q40 50 40 58 L41 97 Z" fill="#d9b29d" opacity="1"/><path d="M20 48 Q26 58 32 48 L30 62 L22 62 Z" fill="#e2c0ad" opacity="0.8"/><path d="M13 97 L14.5 66 L16.5 50 L18 50 L22 62 Q26 66 30 62 L33.5 50 L35 50 L37.5 66 L39 97 Z" fill="#151313" opacity="1"/><path d="M6.5 78 Q8 74 14 73 L36 74 L38 80 L14 83 Q8 84 6.5 78 Z" fill="#dcb49f" opacity="1"/><path d="M12 83 L37 80 L39 97 L10 97 Z" fill="#171515" opacity="1"/><path d="M21 38 H30 V47 H21 Z" fill="#cfa691" opacity="1"/><ellipse cx="24.6" cy="32.4" rx="5.4" ry="7.6" fill="#dcbcab" opacity="1"/><path d="M16 40 Q18.5 36.5 22 39 L22.5 44 L18.5 47 L16 45 Z" fill="#d6ae99" opacity="1"/><path d="M20.5 26 Q21.5 17.5 29 17.6 Q37.5 19 37 30 L36.6 45 L33 44 Q33.5 32 29.6 27.6 Q24 25 20.5 28 Z" fill="#3a2e2a" opacity="1"/><path d="M40.6 97 L41.5 62 Q41.6 46 52 39 L62 35.5 L72 36 L80 39 Q87.5 46 88 64 L87.6 97 Z" fill="#3e2828" opacity="1"/><path d="M62 35.5 L64.6 54 L68 40 L66 35.6 Z" fill="#d1a58f" opacity="1"/><path d="M45 52 L85 47 M42.5 66 L87 61 M42 80 L88 75 M42 93 L88 88" fill="none" stroke="#6a3a3a" stroke-width="1.1" stroke-linecap="round" stroke-linejoin="round" opacity="0.55"/><path d="M52 40 L50 97 M63 52 L62 97 M76 38 L77 97" fill="none" stroke="#2a1a1a" stroke-width="1.2" stroke-linecap="round" stroke-linejoin="round" opacity="0.5"/><path d="M82 84 Q88 82 89.5 88 L88 97 L80 97 Z" fill="#d1a58f" opacity="1"/><ellipse cx="70.6" cy="29.4" rx="6.6" ry="8.6" fill="#d4a892" opacity="1"/><path d="M61.8 30 Q60.6 15 70 12.4 Q79 12.6 78.4 25 L77.6 32 L75.6 25 Q70 20 65.4 27 L64.6 36 Z" fill="#38292a" opacity="1"/></g><rect x="0" y="0" width="95" height="1" rx="0" fill="#111" opacity="1"/><rect x="94" y="0" width="1" height="97" rx="0" fill="#222" opacity="1"/></g><g transform="translate(72.4,7.1)"><circle cx="8.7" cy="8.7" r="8.7" fill="#72b336"/><circle cx="8.7" cy="8.7" r="7.9" fill="none" stroke="#9bd264" stroke-width="1" opacity=".7"/><path d="M13 9.6 A4.4 4.4 0 1 1 9.2 4.5" fill="none" stroke="#3f7e22" stroke-width="2"/><path d="M8.6 1.8 L12.9 5 L8.4 7.5 Z" fill="#3f7e22"/></g></svg></div>
<div class="ban" style="left:211.7px;top:538.3px;width:101.5px">Update</div>
<div class="lab" style="left:206.7px;top:568px">Character Pack</div>
<svg class="a" style="left:327.3px;top:429px" width="102.5" height="134" viewBox="0 0 102.5 134"><path d="M0.5 133.5 V1.5 Q0.5 0.5 1.5 0.5 H52 L59 10.5 H102.0 V133.5 Z" fill="none" stroke="#474747" stroke-width="1"/><path d="M2 1.8 H51.2 L56.8 9.6 H2 Z" fill="#c9c9c9"/></svg>
<div class="th" style="left:331px;top:441.3px;width:94.5px;height:97px"><svg width="95" height="97" viewBox="0 0 95 97" style="position:absolute;left:0;top:0;display:block"><defs><filter id="f4" x="-10%" y="-10%" width="120%" height="120%"><feGaussianBlur stdDeviation="0.7"/></filter><filter id="g4" x="-30%" y="-30%" width="160%" height="160%"><feGaussianBlur stdDeviation="2.4"/></filter><filter id="k4" x="-10%" y="-10%" width="120%" height="120%"><feGaussianBlur stdDeviation="1.05"/></filter><filter id="h4" x="-30%" y="-30%" width="160%" height="160%"><feGaussianBlur stdDeviation="1.3"/></filter><clipPath id="c4"><rect x="0" y="0" width="95" height="97"/></clipPath><linearGradient id="b4" x1="0" y1="0" x2="0" y2="1"><stop offset="0" stop-color="#5c5249"/><stop offset=".5" stop-color="#665c52"/><stop offset=".84" stop-color="#685e54"/><stop offset=".9" stop-color="#5b5046"/><stop offset="1" stop-color="#53483f"/></linearGradient></defs><g clip-path="url(#c4)"><rect x="0" y="0" width="95" height="97" rx="0" fill="url(#b4)" opacity="1"/><ellipse cx="48" cy="52" rx="32" ry="26" fill="#71675c" opacity="0.55" filter="url(#g4)"/><g filter="url(#f4)"><path d="M19 58 L20.5 97 L27.6 97 L28.6 70 L30 70 L31.6 97 L38 97 L37.6 58 Z" fill="#4d4a46" opacity="1"/><rect x="33.6" y="63" width="10" height="19" rx="0.8" fill="#82867a" opacity="1"/><path d="M35 26.5 Q42 28 43.6 36 L44.2 55 L40.6 56 L38 40 Z" fill="#b4b0aa" opacity="1"/><path d="M21.6 26.5 Q17.6 29 17.8 38 L18.6 54 L21 54 L21.6 40 Z" fill="#a8a4a0" opacity="1"/><path d="M21.4 25 Q28.4 22 36 25 L38.4 52 L20.4 52 Z" fill="#4e4a46" opacity="1"/><path d="M26 24 L28.6 38 L31.2 24 Z" fill="#c8c4c0" opacity="1"/><path d="M21.4 25 L24.6 23.4 L25.4 33 L21.6 34 Z" fill="#c03028" opacity="1"/><path d="M36 25 L32.6 23.4 L32.4 33 L36.6 34 Z" fill="#c03028" opacity="1"/><path d="M20 51 H38.6 L39 59 H19.6 Z" fill="#c5322a" opacity="1"/><ellipse cx="28.2" cy="17" rx="3.9" ry="5.2" fill="#a87c64" opacity="1"/><path d="M24.2 15 Q24.6 10.6 28.4 10.6 Q32.4 10.8 32.4 15.4 Q28.4 12.6 24.2 15 Z" fill="#3a2c24" opacity="1"/><path d="M47.8 58 L49.6 97 L56 97 L57.6 68 L59 68 L60.4 97 L66.6 97 L68.4 58 Z" fill="#4a4744" opacity="1"/><path d="M47.4 30 L41.6 27.4 L43.2 18.6" fill="none" stroke="#cbbfb5" stroke-width="2.8" stroke-linecap="round" stroke-linejoin="round" opacity="1"/><path d="M70.6 36 L72.2 52 L73.4 63" fill="none" stroke="#c9a892" stroke-width="2.5" stroke-linecap="round" stroke-linejoin="round" opacity="1"/><path d="M45.6 28 Q52 24.6 58.4 26 Q65 24.6 70 28 L72.6 38 L69.6 40 L69.4 59 L47.6 59 L47.6 40 L44.4 32 Z" fill="#2a3a98" opacity="1"/><path d="M47.6 55 H69.4 V59.4 H47.6 Z" fill="#3253c4" opacity="1"/><path d="M52 30 Q58 36 65 30 L66 50 Q58 54 52 50 Z" fill="#3446a8" opacity="0.6"/><ellipse cx="58.4" cy="19.2" rx="3.8" ry="5" fill="#bf9781" opacity="1"/><path d="M52.3 17.6 Q52.8 10.6 58.6 10.6 Q64 10.8 63.8 17.4 L58 17.8 L51 19.6 Z" fill="#2e3e92" opacity="1"/><path d="M63.4 71 L82.6 68 L83.2 77.4 L64.4 80.6 Z" fill="#8e8a7c" opacity="1"/><path d="M63 67.6 L82.4 64.6 L82.8 68.6 L63.4 71.6 Z" fill="#4467c8" opacity="1"/><path d="M68 67 Q72.6 62 77.6 65.4" fill="none" stroke="#7a8cc0" stroke-width="1" stroke-linecap="round" stroke-linejoin="round" opacity="1"/></g></g></svg></div>
<div class="ban" style="left:327.3px;top:538.3px;width:102px">Installed</div>
<div class="lab" style="left:322.3px;top:568px">Factory Workers Vol.1</div>
<svg class="a" style="left:211.7px;top:608px" width="102.5" height="134.5" viewBox="0 0 102.5 134.5"><path d="M0.5 134.0 V1.5 Q0.5 0.5 1.5 0.5 H52 L59 10.5 H102.0 V134.0 Z" fill="none" stroke="#474747" stroke-width="1"/><path d="M2 1.8 H51.2 L56.8 9.6 H2 Z" fill="#c9c9c9"/></svg>
<div class="th" style="left:215.2px;top:620.5px;width:94.5px;height:119.5px"><svg width="95" height="120" viewBox="0 0 95 120" style="position:absolute;left:0;top:0;display:block"><defs><filter id="f5" x="-10%" y="-10%" width="120%" height="120%"><feGaussianBlur stdDeviation="0.7"/></filter><filter id="g5" x="-30%" y="-30%" width="160%" height="160%"><feGaussianBlur stdDeviation="2.4"/></filter><filter id="k5" x="-10%" y="-10%" width="120%" height="120%"><feGaussianBlur stdDeviation="1.05"/></filter><filter id="h5" x="-30%" y="-30%" width="160%" height="160%"><feGaussianBlur stdDeviation="1.3"/></filter><clipPath id="c5"><rect x="0" y="0" width="95" height="120"/></clipPath><linearGradient id="b5" x1="0" y1="0" x2="1" y2="0.3"><stop offset="0" stop-color="#5a3d2e"/><stop offset=".6" stop-color="#694937"/><stop offset="1" stop-color="#5e4232"/></linearGradient><radialGradient id="s5" cx=".48" cy=".36" r=".7"><stop offset="0" stop-color="#e6b99e"/><stop offset=".55" stop-color="#d9a78c"/><stop offset="1" stop-color="#c08c74"/></radialGradient><linearGradient id="n5" x1="0" y1="0" x2="0" y2="1"><stop offset="0" stop-color="#c89378"/><stop offset=".5" stop-color="#d9a58c"/><stop offset="1" stop-color="#ecb6a0"/></linearGradient></defs><g clip-path="url(#c5)"><rect x="0" y="0" width="95" height="120" rx="0" fill="url(#b5)" opacity="1"/><g filter="url(#k5)"><path d="M2 112 Q6 84 12 62 Q10 34 18 14 Q26 -2 56 -3 Q84 0 90 30 Q94 52 86 78 L84 104 L70 100 L30 100 L14 118 Z" fill="#856551" opacity="1"/><path d="M12 60 Q10 90 4 112 L16 116 Q24 100 28 80 L26 50 Z" fill="#664838" opacity="1"/><path d="M78 50 Q86 70 84 100 L76 96 Q80 72 74 56 Z" fill="#8a6850" opacity="1"/><path d="M0 120 L0 112 Q18 106 38 100 L39 84 L72 84 L73 100 Q86 106 95 110 L95 120 Z" fill="url(#n5)" opacity="1"/><path d="M38 88 Q55 100 73 88 L73 94 Q55 104 38 94 Z" fill="#b9846c" opacity="0.55"/><ellipse cx="55.4" cy="57.5" rx="25.6" ry="33.2" fill="url(#s5)" opacity="1"/><path d="M24 46 Q22 18 44 8 Q66 2 82 20 Q92 36 88 50 Q78 34 64 30 Q48 26 38 36 Q32 42 30 54 Z" fill="#8e6e58" opacity="1"/><path d="M50 10 Q74 8 86 30 Q92 44 88 52 Q82 36 70 30 Q60 22 50 10 Z" fill="#a98a6c" opacity="1"/><path d="M20 34 Q26 4 50 -2 L62 0 Q44 14 38 32 Q32 44 30 58 L22 58 Z" fill="#6b4d3d" opacity="1"/><path d="M34.6 42 Q41 37.6 49 40.6" fill="none" stroke="#8a5c42" stroke-width="1.5" stroke-linecap="round" stroke-linejoin="round" opacity="0.85"/><path d="M62 39.6 Q69 36.2 76.6 39.6" fill="none" stroke="#8a5c42" stroke-width="1.5" stroke-linecap="round" stroke-linejoin="round" opacity="0.85"/><ellipse cx="41.8" cy="46" rx="4.6" ry="2" fill="#dcc8bc" opacity="1"/><ellipse cx="68.8" cy="44.8" rx="4.6" ry="2" fill="#dcc8bc" opacity="1"/><ellipse cx="42.4" cy="46" rx="1.9" ry="1.8" fill="#5e6870" opacity="1"/><ellipse cx="69.6" cy="44.8" rx="1.9" ry="1.8" fill="#5e6870" opacity="1"/><path d="M36.8 45.6 Q41.8 42.6 46.8 45.8" fill="none" stroke="#4a3228" stroke-width="1.1" stroke-linecap="round" stroke-linejoin="round" opacity="1"/><path d="M63.8 44.4 Q68.8 41.4 73.8 44.6" fill="none" stroke="#4a3228" stroke-width="1.1" stroke-linecap="round" stroke-linejoin="round" opacity="1"/><ellipse cx="41.8" cy="49.5" rx="5.4" ry="1.6" fill="#c08a70" opacity="0.55"/><ellipse cx="68.8" cy="48.4" rx="5.4" ry="1.6" fill="#c08a70" opacity="0.55"/><path d="M52 52 Q53 60 51.4 63 Q57 66.6 62 63 Q60.6 58 60 52 Q57 58 52 52 Z" fill="#c8917a" opacity="0.55"/><ellipse cx="56.8" cy="64.6" rx="4.6" ry="1.5" fill="#b67f6a" opacity="0.7"/><path d="M46.8 72.6 Q52 70 57.2 71.4 Q62.6 70 67.6 72.6 Q57.4 75 46.8 72.6 Z" fill="#c07a6c" opacity="1"/><path d="M47.6 73.2 Q57.4 80.6 67 73.2 Q57.4 75.6 47.6 73.2 Z" fill="#cf8a7a" opacity="1"/><ellipse cx="57.2" cy="86" rx="9" ry="3.4" fill="#e2b098" opacity="0.6"/></g></g><g transform="translate(64.2,5.8)" opacity=".5"><rect x=".5" y=".5" width="25" height="9.6" fill="none" stroke="#c9b3a4" stroke-width=".9"/><text x="3.6" y="8" font-family="Liberation Sans,sans-serif" font-size="7.4" font-weight="bold" fill="#c9b3a4" textLength="17" lengthAdjust="spacingAndGlyphs">cc3</text></g></svg></div>
<div class="lab" style="left:206.7px;top:747.5px">Scan Reality -<br>Natasha</div>
<svg class="a" style="left:327.3px;top:608px" width="102.5" height="134.5" viewBox="0 0 102.5 134.5"><path d="M0.5 134.0 V1.5 Q0.5 0.5 1.5 0.5 H52 L59 10.5 H102.0 V134.0 Z" fill="none" stroke="#474747" stroke-width="1"/><path d="M2 1.8 H51.2 L56.8 9.6 H2 Z" fill="#c9c9c9"/></svg>
<div class="th" style="left:331px;top:620.5px;width:94.5px;height:119.5px"><svg width="95" height="120" viewBox="0 0 95 120" style="position:absolute;left:0;top:0;display:block"><defs><filter id="f6" x="-10%" y="-10%" width="120%" height="120%"><feGaussianBlur stdDeviation="0.7"/></filter><filter id="g6" x="-30%" y="-30%" width="160%" height="160%"><feGaussianBlur stdDeviation="2.4"/></filter><filter id="k6" x="-10%" y="-10%" width="120%" height="120%"><feGaussianBlur stdDeviation="1.05"/></filter><filter id="h6" x="-30%" y="-30%" width="160%" height="160%"><feGaussianBlur stdDeviation="1.3"/></filter><clipPath id="c6"><rect x="0" y="0" width="95" height="120"/></clipPath><radialGradient id="b6" cx=".75" cy=".3" r=".95"><stop offset="0" stop-color="#6c4b39"/><stop offset=".6" stop-color="#5c4031"/><stop offset="1" stop-color="#463127"/></radialGradient><radialGradient id="s6" cx=".46" cy=".34" r=".72"><stop offset="0" stop-color="#e4bca4"/><stop offset=".5" stop-color="#d5a58d"/><stop offset="1" stop-color="#b98a74"/></radialGradient><linearGradient id="n6" x1="0" y1="0" x2="0" y2="1"><stop offset="0" stop-color="#b8826e"/><stop offset=".5" stop-color="#d39984"/><stop offset="1" stop-color="#e8a894"/></linearGradient></defs><g clip-path="url(#c6)"><rect x="0" y="0" width="95" height="120" rx="0" fill="url(#b6)" opacity="1"/><g filter="url(#k6)"><path d="M0 120 L0 110 Q16 104 26 96 L27 76 L80 76 L81 96 Q88 104 95 108 L95 120 Z" fill="url(#n6)" opacity="1"/><path d="M26 90 Q50 112 81 88 L81 96 Q50 116 26 98 Z" fill="#a8745f" opacity="0.6"/><ellipse cx="19.6" cy="56" rx="3.4" ry="7" fill="#c48e78" opacity="1"/><ellipse cx="81" cy="54" rx="2.6" ry="6.4" fill="#c99680" opacity="1"/><path d="M20 44 Q20 24 50 22 Q81 24 81 46 Q82 70 72 86 Q62 99 50 99 Q38 99 29 86 Q19 70 20 44 Z" fill="url(#s6)" opacity="1"/><path d="M24 68 Q30 90 50 96 Q70 92 78 68 Q74 84 60 86 Q50 80 40 86 Q28 84 24 68 Z" fill="#9a8474" opacity="0.55"/><path d="M36 76 Q50 70 64 76 Q58 74 50 75 Q42 74 36 76 Z" fill="#8e7868" opacity="0.6"/><path d="M12 52 Q6 24 24 8 Q44 -4 68 2 Q88 8 86 36 L82 52 Q82 38 76 30 Q62 24 50 28 Q34 26 24 36 Q20 44 19.6 56 Z" fill="#2c201b" opacity="1"/><path d="M66 2 Q86 8 85 34 L82 48 Q82 36 77 29 Q74 14 66 2 Z" fill="#5e5026" opacity="0.5"/><path d="M22 6 Q44 -6 70 0 L60 6 Q46 6 34 16 Z" fill="#33251f" opacity="0.9"/><path d="M26 44.6 Q34 40.4 46.4 44.4 L46 47 Q34 43.6 26.6 47.6 Z" fill="#35251f" opacity="1"/><path d="M57 43.6 Q67 38.6 75.6 40.6 L75.8 43 Q66.6 41.6 57.6 46.4 Z" fill="#35251f" opacity="1"/><ellipse cx="36" cy="50.4" rx="4.8" ry="2" fill="#d8c2b4" opacity="1"/><ellipse cx="65.6" cy="49" rx="4.8" ry="2" fill="#d8c2b4" opacity="1"/><ellipse cx="34.8" cy="50.4" rx="1.9" ry="1.8" fill="#5c6870" opacity="1"/><ellipse cx="64.4" cy="49" rx="1.9" ry="1.8" fill="#5c6870" opacity="1"/><path d="M30.6 49.8 Q36 46.8 41.4 50.2" fill="none" stroke="#2e201a" stroke-width="1.2" stroke-linecap="round" stroke-linejoin="round" opacity="1"/><path d="M60.2 48.6 Q65.6 45.4 71 48.4" fill="none" stroke="#2e201a" stroke-width="1.2" stroke-linecap="round" stroke-linejoin="round" opacity="1"/><ellipse cx="36" cy="54" rx="5.6" ry="1.7" fill="#b8846c" opacity="0.55"/><ellipse cx="65.6" cy="52.6" rx="5.6" ry="1.7" fill="#b8846c" opacity="0.55"/><path d="M46.4 52 Q47.4 64 45.4 68 Q51 72 56.8 68 Q55 62 55 52 Q51 60 46.4 52 Z" fill="#c08a76" opacity="0.55"/><ellipse cx="51.4" cy="69.6" rx="4.8" ry="1.5" fill="#a8745f" opacity="0.7"/><path d="M41.6 79.4 Q46.6 77.6 50.4 78.6 Q54.6 77.6 59.6 79.4 Q50.4 81 41.6 79.4 Z" fill="#a86a72" opacity="1"/><path d="M42.6 80 Q50.4 85 58.6 80 Q50.4 81.8 42.6 80 Z" fill="#bf8490" opacity="1"/></g></g><g transform="translate(63.6,5.8)" opacity=".5"><rect x=".5" y=".5" width="25" height="9.6" fill="none" stroke="#c9b3a4" stroke-width=".9"/><text x="3.6" y="8" font-family="Liberation Sans,sans-serif" font-size="7.4" font-weight="bold" fill="#c9b3a4" textLength="17" lengthAdjust="spacingAndGlyphs">cc3</text></g></svg></div>
<div class="lab" style="left:322.3px;top:747.5px">Scan Reality - Timothy</div>
<div class="pt" style="left:347.5px;top:783.5px">Total : 213</div>
<svg class="a" style="left:402px;top:786px" width="8" height="9" viewBox="0 0 8 9"><path d="M7.5 0.5 V8.5 L0.5 4.5 Z" fill="#4a4a4a"/></svg>
<div class="pt" style="left:418.5px;top:783.5px;word-spacing:2px">1 / 1</div>
<svg class="a" style="left:453.5px;top:786px" width="8" height="9" viewBox="0 0 8 9"><path d="M0.5 0.5 V8.5 L7.5 4.5 Z" fill="#4a4a4a"/></svg>
</div>
<div class="dlg" style="left:33px;top:695px;width:176px;height:195px">
<div class="tb" style="height:21.5px"><span class="a" style="left:21.5px;top:4px;line-height:14px;font-size:10px;letter-spacing:-0.3px;white-space:nowrap">Tag Editor</span></div>
<svg class="a" style="left:6px;top:5px" width="11.5" height="11.5" viewBox="0 0 12 12"><rect width="12" height="12" fill="#151515"/><path d="M6 1.6 L9.8 3.8 V8.2 L6 10.4 L2.2 8.2 V3.8 Z" fill="none" stroke="#8ccf1a" stroke-width="1"/><circle cx="6" cy="6" r="1.7" fill="none" stroke="#8ccf1a" stroke-width="1"/></svg>
<svg class="a" style="left:160px;top:6.5px" width="9.5" height="9.5" viewBox="0 0 9.5 9.5"><path d="M0.5 0.5 L9.0 9.0 M9.0 0.5 L0.5 9.0" stroke="#222" stroke-width="1.1" fill="none"/></svg>
<div class="ds" style="left:11px;top:37px">Select Tag:</div>
<div class="in" style="left:86px;top:33px;width:19px;height:19px;border-color:#444"></div><div class="ds" style="left:88.5px;top:37px;font-size:7px;color:#4a4a4a">RE<span style="font-size:10px;position:relative;top:0.5px;left:-1px">I</span></div>
<div class="in" style="left:116.5px;top:33px;width:18.5px;height:19px"></div><svg class="a" style="left:121px;top:38px" width="9" height="9" viewBox="0 0 9 9"><path d="M4.5 0.5 V8.5 M0.5 4.5 H8.5" stroke="#d8d8d8" stroke-width="1.1"/></svg>
<div class="in" style="left:146.5px;top:33px;width:18.5px;height:19px;border-color:#444"></div><div class="a" style="left:152.5px;top:42px;width:6.5px;height:1px;background:#4a4a4a"></div>
<div class="in" style="left:11px;top:63px;width:154px;height:19px"></div>
<svg class="a" style="left:147.5px;top:67px" width="11" height="11" viewBox="0 0 11 11"><circle cx="4.2" cy="4.2" r="3.1" fill="none" stroke="#d0d0d0" stroke-width="1"/><path d="M6.5 6.5 L10 10" stroke="#d0d0d0" stroke-width="1.2"/></svg>
<div class="in" style="left:11px;top:89.5px;width:154px;height:95px;background:none"></div>
<div class="a" style="left:22.5px;top:100.5px;width:11px;height:11px;border:1px solid #d4d4d4"></div><svg class="a" style="left:22.5px;top:97.5px" width="15" height="14" viewBox="0 0 15 14"><path d="M3 8.5 L4.62 11.2 L13 2" fill="none" stroke="#d4d4d4" stroke-width="1.4"/></svg>
<div class="ds" style="left:37.5px;top:99.5px">Casual</div>
<div class="a" style="left:22.5px;top:119.35px;width:11px;height:11px;border:1px solid #d4d4d4"></div><svg class="a" style="left:22.5px;top:116.35px" width="15" height="14" viewBox="0 0 15 14"><path d="M3 8.5 L4.62 11.2 L13 2" fill="none" stroke="#d4d4d4" stroke-width="1.4"/></svg>
<div class="ds" style="left:37.5px;top:118.3px">Female</div>
<div class="a" style="left:22.5px;top:138.2px;width:11px;height:11px;border:1px solid #d4d4d4"></div><svg class="a" style="left:22.5px;top:135.2px" width="15" height="14" viewBox="0 0 15 14"><path d="M3 8.5 L4.62 11.2 L13 2" fill="none" stroke="#d4d4d4" stroke-width="1.4"/></svg>
<div class="ds" style="left:37.5px;top:137.2px">Male</div>
<div class="a" style="left:22.5px;top:157.05px;width:11px;height:11px;border:1px solid #d4d4d4"></div><svg class="a" style="left:22.5px;top:154.05px" width="15" height="14" viewBox="0 0 15 14"><path d="M3 8.5 L4.62 11.2 L13 2" fill="none" stroke="#d4d4d4" stroke-width="1.4"/></svg>
<div class="ds" style="left:37.5px;top:156.1px">Toon</div>
</div>
<div class="dlg" style="left:936px;top:251px;width:179px;height:186.5px">
<div class="tb" style="height:29.5px"><span class="a" style="left:29px;top:7.5px;line-height:14px;font-size:11.5px;letter-spacing:-0.1px;white-space:nowrap">Search Options</span></div>
<svg class="a" style="left:8.5px;top:6.5px" width="15" height="15" viewBox="0 0 15 15"><rect width="15" height="15" rx="1.5" fill="#1c2a10"/><path d="M2.2 8.6 H12.8 V11.2 H10.6 V12.8 H4.4 V11.2 H2.2 Z M5 10.4 H10" fill="none" stroke="#8ccf1a" stroke-width="1"/><circle cx="4" cy="5.2" r="1.5" fill="none" stroke="#8ccf1a" stroke-width=".9"/><circle cx="7.5" cy="4.2" r="1.7" fill="none" stroke="#8ccf1a" stroke-width=".9"/><circle cx="11" cy="5.2" r="1.5" fill="none" stroke="#8ccf1a" stroke-width=".9"/></svg>
<svg class="a" style="left:158.5px;top:8.5px" width="11" height="11" viewBox="0 0 11 11"><path d="M0.5 0.5 L10.5 10.5 M10.5 0.5 L0.5 10.5" stroke="#222" stroke-width="1.1" fill="none"/></svg>
<div class="in" style="left:10.5px;top:39.5px;width:158.5px;height:136px;background:none"></div>
<div class="a" style="left:30px;top:55px;width:15px;height:15px;border:1px solid #d4d4d4"></div><svg class="a" style="left:30px;top:52px" width="19" height="18" viewBox="0 0 19 18"><path d="M3 10.5 L6.3 15.2 L17 2" fill="none" stroke="#d4d4d4" stroke-width="1.4"/></svg>
<div class="d" style="left:54px;top:55.0px;font-size:12px;letter-spacing:0">File Name</div>
<div class="a" style="left:30px;top:86px;width:15px;height:15px;border:1px solid #d4d4d4"></div><svg class="a" style="left:30px;top:83px" width="19" height="18" viewBox="0 0 19 18"><path d="M3 10.5 L6.3 15.2 L17 2" fill="none" stroke="#d4d4d4" stroke-width="1.4"/></svg>
<div class="d" style="left:54px;top:86.0px;font-size:12px;letter-spacing:0">Author</div>
<div class="a" style="left:30px;top:117px;width:15px;height:15px;border:1px solid #d4d4d4"></div><svg class="a" style="left:30px;top:114px" width="19" height="18" viewBox="0 0 19 18"><path d="M3 10.5 L6.3 15.2 L17 2" fill="none" stroke="#d4d4d4" stroke-width="1.4"/></svg>
<div class="d" style="left:54px;top:117.0px;font-size:12px;letter-spacing:0">Tag</div>
<div class="a" style="left:30px;top:148px;width:15px;height:15px;border:1px solid #d4d4d4"></div><svg class="a" style="left:30px;top:145px" width="19" height="18" viewBox="0 0 19 18"><path d="M3 10.5 L6.3 15.2 L17 2" fill="none" stroke="#d4d4d4" stroke-width="1.4"/></svg>
<div class="d" style="left:54px;top:148.0px;font-size:12px;letter-spacing:0">Folder Name</div>
</div>
<div class="dlg" style="left:931px;top:540px;width:459px;height:357px">
<div class="tb" style="height:22px"><span class="a" style="left:21.5px;top:4px;line-height:14px;font-size:10px;letter-spacing:-0.3px;white-space:nowrap">Settings</span></div>
<svg class="a" style="left:6px;top:5px" width="11.5" height="11.5" viewBox="0 0 12 12"><rect width="12" height="12" fill="#151515"/><path d="M6 1.6 L9.8 3.8 V8.2 L6 10.4 L2.2 8.2 V3.8 Z" fill="none" stroke="#8ccf1a" stroke-width="1"/><circle cx="6" cy="6" r="1.7" fill="none" stroke="#8ccf1a" stroke-width="1"/></svg>
<svg class="a" style="left:442.5px;top:6.5px" width="9" height="9" viewBox="0 0 9 9"><path d="M0.5 0.5 L8.5 8.5 M8.5 0.5 L0.5 8.5" stroke="#222" stroke-width="1.1" fill="none"/></svg>
<div class="ds" style="left:11px;top:33.0px;">Select Target Assets Folder :</div>
<div class="ds" style="left:11px;top:51.5px;">Template Folders :</div>
<div class="in" style="left:11px;top:71px;width:392.5px;height:18px"></div>
<div class="ds" style="left:14.5px;top:74.0px;">C:/Users/Public/Documents/Reallusion/Reallusion Templates</div>
<div class="a" style="left:384px;top:72px;width:1px;height:16px;background:#3c3c3c"></div>
<svg class="a" style="left:389.5px;top:77.5px" width="9" height="6" viewBox="0 0 9 6"><path d="M0.5 0.5 H8.5 L4.5 5 Z" fill="#e0e0e0"/></svg>
<div class="in" style="left:407.5px;top:71px;width:18.5px;height:18px"></div>
<svg class="a" style="left:410px;top:73px" width="14" height="14" viewBox="0 0 14 14"><path d="M7 1.6 L8.3 3.4 L10.5 2.9 L10.6 5.1 L12.5 6.2 L11.3 8 M5.6 11.9 L4.4 10.5 L2.4 10.6 L2.9 8.5 L1.5 7 L2.9 5.4 L2.5 3.3 L4.6 3.3 L5.7 1.7 L7 1.6" fill="none" stroke="#d8d8d8" stroke-width="1.05" stroke-linejoin="round"/><path d="M6.8 9.6 L8.8 11.6 L12.4 7.8" fill="none" stroke="#d8d8d8" stroke-width="1.3"/></svg>
<div class="in" style="left:430px;top:71px;width:18px;height:18px"></div><svg class="a" style="left:435px;top:76px" width="8" height="8" viewBox="0 0 8 8"><path d="M4 0 V8 M0 4 H8" stroke="#d8d8d8" stroke-width="1"/></svg>
<div class="ds" style="left:11px;top:100.0px;">Custom Folders :</div>
<div class="ds" style="left:11px;top:117.5px;">Name</div>
<div class="ds" style="left:116px;top:117.5px;">Path</div>
<div class="ds" style="right:11.5px;top:119px;color:#83bd0f;text-decoration:underline">Know More</div>
<div class="in" style="left:11px;top:134px;width:100px;height:18px"></div>
<div class="ds" style="left:14.5px;top:137.0px;">Default</div>
<div class="in" style="left:115px;top:134px;width:310.5px;height:18px"></div>
<div class="ds" style="left:118.5px;top:137.0px;">C:/Users/Public/Documents/Reallusion/Reallusion Custom</div>
<div class="in" style="left:430px;top:134px;width:18px;height:18px"></div><svg class="a" style="left:435px;top:139px" width="8" height="8" viewBox="0 0 8 8"><path d="M4 0 V8 M0 4 H8" stroke="#d8d8d8" stroke-width="1"/></svg>
<div class="in" style="left:11px;top:157px;width:437px;height:64px;background:none;border-color:#454545"></div>
<div class="in" style="left:18.5px;top:164.5px;width:92.5px;height:18px"></div>
<div class="ds" style="left:22px;top:167.5px;">Mocap Project</div>
<div class="in" style="left:115px;top:164.5px;width:303px;height:18px"></div>
<div class="ds" style="left:118.5px;top:167.5px;">D:/Mocap Project/Reallusion Custom</div>
<svg class="a" style="left:430px;top:169.0px" width="9.5" height="9.5" viewBox="0 0 9.5 9.5"><path d="M0.5 0.5 L9.0 9.0 M9.0 0.5 L0.5 9.0" stroke="#e0e0e0" stroke-width="1.2" fill="none"/></svg>
<div class="in" style="left:18.5px;top:193.0px;width:92.5px;height:18px"></div>
<div class="ds" style="left:22px;top:196.0px;">GTC 2022</div>
<div class="in" style="left:115px;top:193.0px;width:303px;height:18px"></div>
<div class="ds" style="left:118.5px;top:196.0px;">W:/VAD Server/GTC 2022/Reallusion Custom</div>
<svg class="a" style="left:430px;top:197.5px" width="9.5" height="9.5" viewBox="0 0 9.5 9.5"><path d="M0.5 0.5 L9.0 9.0 M9.0 0.5 L0.5 9.0" stroke="#e0e0e0" stroke-width="1.2" fill="none"/></svg>
<div class="a" style="left:11px;top:230.5px;width:11px;height:11px;border:1px solid #d4d4d4"></div><svg class="a" style="left:11px;top:227.5px" width="15" height="14" viewBox="0 0 15 14"><path d="M3 8.5 L4.62 11.2 L13 2" fill="none" stroke="#d4d4d4" stroke-width="1.4"/></svg>
<div class="ds" style="left:29px;top:230.0px;">Update with File Explorer</div>
<div class="a" style="left:11px;top:253.7px;width:11px;height:11px;border:1px solid #d4d4d4"></div>
<div class="ds" style="left:29px;top:253.2px;">Hide Invisible Content</div>
<div class="a" style="left:11px;top:276.9px;width:11px;height:11px;border:1px solid #d4d4d4"></div>
<div class="ds" style="left:29px;top:276.4px;">Hide Update Prompt</div>
<div class="a" style="left:11px;top:300.1px;width:11px;height:11px;border:1px solid #d4d4d4"></div>
<div class="ds" style="left:29px;top:299.6px;">Automatically sync content when launching program</div>
<div class="in" style="left:256px;top:327.5px;width:90px;height:18px"></div>
<div class="ds" style="left:294px;top:330.5px;">OK</div>
<div class="in" style="left:357px;top:327.5px;width:91px;height:18px"></div>
<div class="ds" style="left:387px;top:330.5px;">Cancel</div>
</div>
<div class="a" style="left:1476px;top:54.5px;width:200px;height:376px;background:#000;box-shadow:0 3px 7px rgba(0,0,0,.4)">
<div class="mi" style="top:7.5px">All</div>
<svg class="a" style="left:12.5px;top:10.0px" width="7" height="6" viewBox="0 0 7 6"><path d="M0.8 3 L2.7 5 L6.2 1" fill="none" stroke="#f0f0f0" stroke-width="1.4"/></svg>
<div class="mi" style="top:26.0px">Installed</div>
<div class="mi" style="top:44.5px">Not Installed</div>
<div class="mi" style="top:63.5px">Update</div>
<div class="mi" style="top:86.0px">Animated Thumbnail</div>
<svg class="a" style="left:12.5px;top:88.5px" width="7" height="6" viewBox="0 0 7 6"><path d="M0.8 3 L2.7 5 L6.2 1" fill="none" stroke="#f0f0f0" stroke-width="1.4"/></svg>
<div class="mi" style="top:108.5px">Online</div>
<svg class="a" style="left:12.5px;top:111.0px" width="7" height="6" viewBox="0 0 7 6"><path d="M0.8 3 L2.7 5 L6.2 1" fill="none" stroke="#f0f0f0" stroke-width="1.4"/></svg>
<div class="mi" style="top:127.0px">Offline</div>
<div class="mi" style="top:149.5px">View Installing List</div>
<div class="mi" style="top:168.5px">Sync Installed Assets...</div>
<div class="mi" style="top:187.0px">Create CC3 Custom Content Link...</div>
<div class="mi" style="top:206.0px">Smart Import Custom Content...</div>
<div class="mi" style="top:228.0px">Export Data...</div>
<svg class="a" style="left:183.5px;top:230.0px" width="5" height="8" viewBox="0 0 5 8"><path d="M0.5 0.5 L4.5 4 L0.5 7.5 Z" fill="#f0f0f0"/></svg>
<div class="mi" style="top:247.0px">Import Data</div>
<svg class="a" style="left:183.5px;top:249.0px" width="5" height="8" viewBox="0 0 5 8"><path d="M0.5 0.5 L4.5 4 L0.5 7.5 Z" fill="#f0f0f0"/></svg>
<div class="mi" style="top:270.5px">Settings</div>
<div class="mi" style="top:293.0px">Packager</div>
<div class="mi" style="top:315.5px">Reallusion Content Store</div>
<div class="mi" style="top:334.5px">Reallusion Marketplace</div>
<div class="mi" style="top:356.5px">Video Tutorials</div>
<div class="a" style="left:8px;top:144px;width:184px;height:1px;background:#4a4a4a"></div>
<div class="a" style="left:8px;top:264.5px;width:184px;height:1px;background:#333"></div>
<div class="hl" style="top:81.0px;height:23.0px"></div>
<div class="hl" style="top:200.0px;height:23.0px"></div>
<div class="hl" style="top:265.0px;height:23.0px"></div>
<div class="hl" style="top:310.0px;height:42.0px"></div>
</div>
</div></body></html>
